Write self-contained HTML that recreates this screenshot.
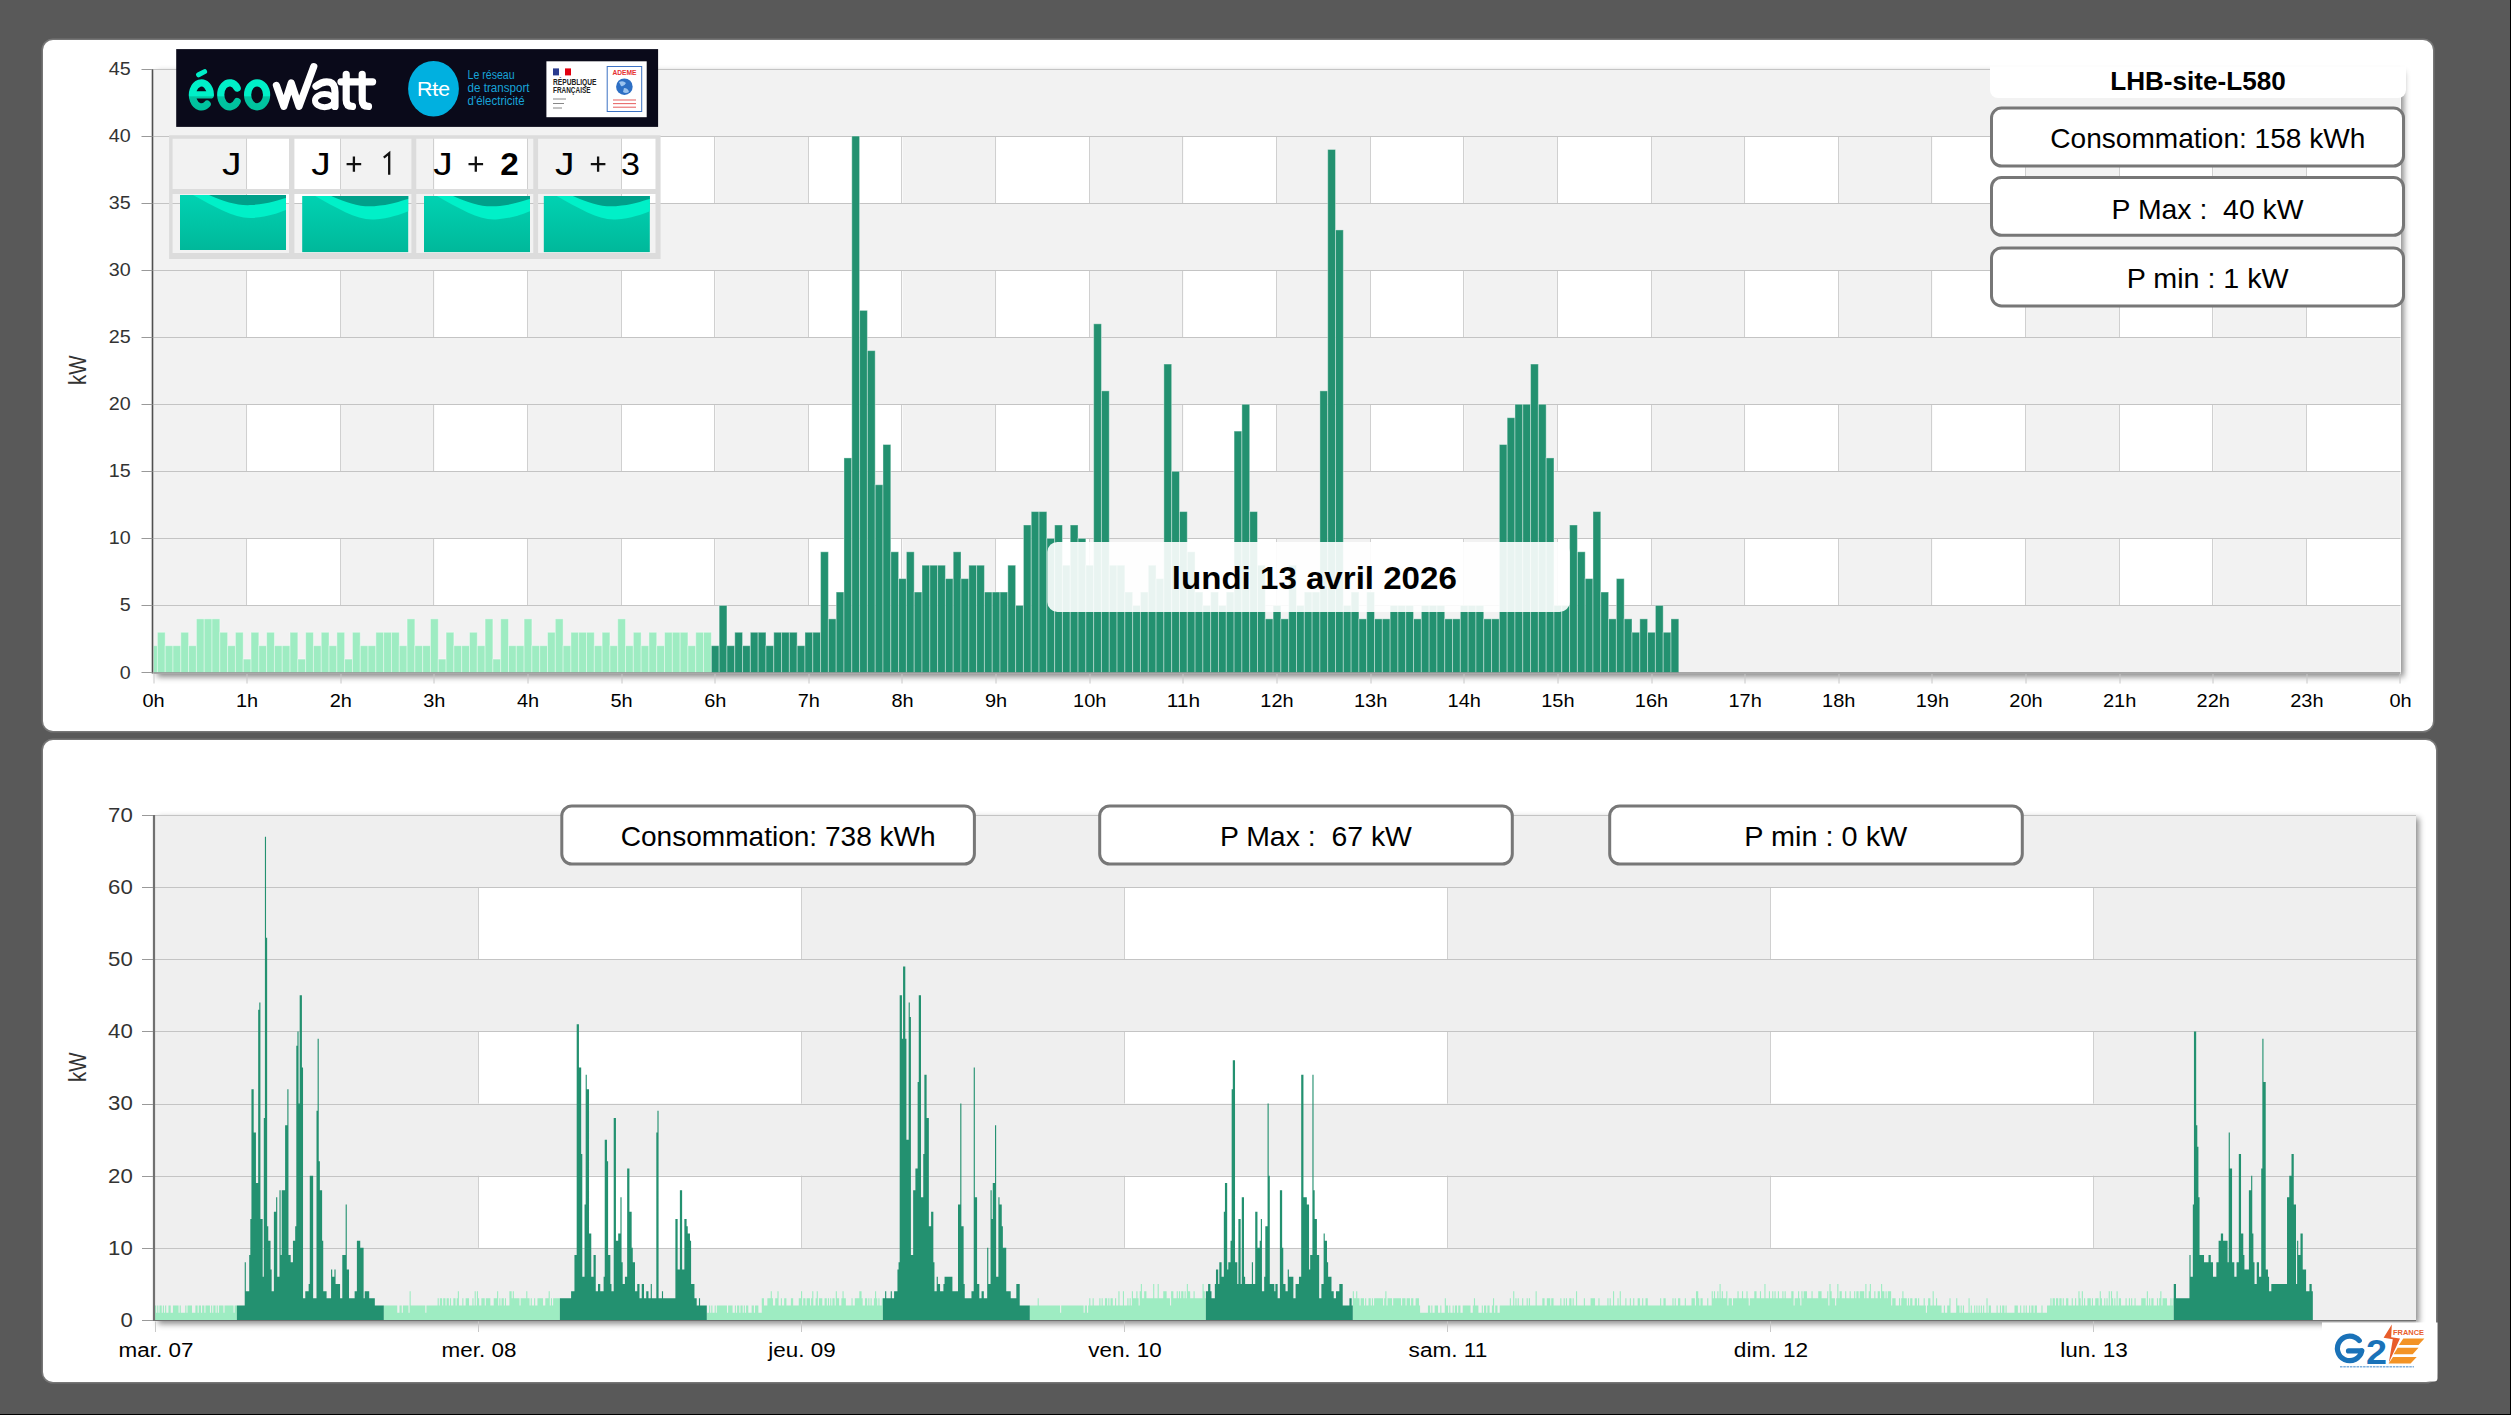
<!DOCTYPE html>
<html><head><meta charset="utf-8"><style>
html,body{margin:0;padding:0;}
body{width:2511px;height:1415px;background:#595959;position:relative;overflow:hidden;font-family:'Liberation Sans',sans-serif;}
.panel{position:absolute;background:#fff;border-radius:10px;box-shadow:0 0 0 1.5px #767676;}
.pshadow{position:absolute;box-shadow:3px 3px 6px rgba(0,0,0,0.45);background:#fff;}
svg{position:absolute;left:0;top:0;}
svg text{font-family:'Liberation Sans',sans-serif;}
</style></head><body>
<div style="position:absolute;left:2510px;top:0;width:1px;height:1415px;background:#000"></div>
<div style="position:absolute;left:0;top:1414px;width:2511px;height:1px;background:#000"></div>
<div class="panel" style="left:43px;top:39.5px;width:2389.5px;height:691px"></div>
<div class="panel" style="left:43px;top:739.5px;width:2393px;height:642px"></div>
<div class="pshadow" style="left:153.5px;top:69.0px;width:2247.0px;height:604.5px"></div>
<div class="pshadow" style="left:155.0px;top:815.0px;width:2261.0px;height:506.0px"></div>
<svg width="2511" height="1415" viewBox="0 0 2511 1415">
<rect x="153.5" y="69.0" width="2247" height="603.5" fill="#f2f2f2"/>
<rect x="247.12" y="538.39" width="93.62" height="67.06" fill="#fff"/>
<rect x="434.38" y="538.39" width="93.62" height="67.06" fill="#fff"/>
<rect x="621.62" y="538.39" width="93.62" height="67.06" fill="#fff"/>
<rect x="808.88" y="538.39" width="93.62" height="67.06" fill="#fff"/>
<rect x="996.12" y="538.39" width="93.62" height="67.06" fill="#fff"/>
<rect x="1183.38" y="538.39" width="93.62" height="67.06" fill="#fff"/>
<rect x="1370.62" y="538.39" width="93.62" height="67.06" fill="#fff"/>
<rect x="1557.88" y="538.39" width="93.62" height="67.06" fill="#fff"/>
<rect x="1745.12" y="538.39" width="93.62" height="67.06" fill="#fff"/>
<rect x="1932.38" y="538.39" width="93.62" height="67.06" fill="#fff"/>
<rect x="2119.62" y="538.39" width="93.62" height="67.06" fill="#fff"/>
<rect x="2306.88" y="538.39" width="93.62" height="67.06" fill="#fff"/>
<line x1="246.5" y1="538.39" x2="246.5" y2="605.44" stroke="#d0d0d0" stroke-width="1"/>
<line x1="340.5" y1="538.39" x2="340.5" y2="605.44" stroke="#d0d0d0" stroke-width="1"/>
<line x1="433.5" y1="538.39" x2="433.5" y2="605.44" stroke="#d0d0d0" stroke-width="1"/>
<line x1="527.5" y1="538.39" x2="527.5" y2="605.44" stroke="#d0d0d0" stroke-width="1"/>
<line x1="621.5" y1="538.39" x2="621.5" y2="605.44" stroke="#d0d0d0" stroke-width="1"/>
<line x1="714.5" y1="538.39" x2="714.5" y2="605.44" stroke="#d0d0d0" stroke-width="1"/>
<line x1="808.5" y1="538.39" x2="808.5" y2="605.44" stroke="#d0d0d0" stroke-width="1"/>
<line x1="901.5" y1="538.39" x2="901.5" y2="605.44" stroke="#d0d0d0" stroke-width="1"/>
<line x1="995.5" y1="538.39" x2="995.5" y2="605.44" stroke="#d0d0d0" stroke-width="1"/>
<line x1="1089.5" y1="538.39" x2="1089.5" y2="605.44" stroke="#d0d0d0" stroke-width="1"/>
<line x1="1182.5" y1="538.39" x2="1182.5" y2="605.44" stroke="#d0d0d0" stroke-width="1"/>
<line x1="1276.5" y1="538.39" x2="1276.5" y2="605.44" stroke="#d0d0d0" stroke-width="1"/>
<line x1="1370.5" y1="538.39" x2="1370.5" y2="605.44" stroke="#d0d0d0" stroke-width="1"/>
<line x1="1463.5" y1="538.39" x2="1463.5" y2="605.44" stroke="#d0d0d0" stroke-width="1"/>
<line x1="1557.5" y1="538.39" x2="1557.5" y2="605.44" stroke="#d0d0d0" stroke-width="1"/>
<line x1="1651.5" y1="538.39" x2="1651.5" y2="605.44" stroke="#d0d0d0" stroke-width="1"/>
<line x1="1744.5" y1="538.39" x2="1744.5" y2="605.44" stroke="#d0d0d0" stroke-width="1"/>
<line x1="1838.5" y1="538.39" x2="1838.5" y2="605.44" stroke="#d0d0d0" stroke-width="1"/>
<line x1="1931.5" y1="538.39" x2="1931.5" y2="605.44" stroke="#d0d0d0" stroke-width="1"/>
<line x1="2025.5" y1="538.39" x2="2025.5" y2="605.44" stroke="#d0d0d0" stroke-width="1"/>
<line x1="2119.5" y1="538.39" x2="2119.5" y2="605.44" stroke="#d0d0d0" stroke-width="1"/>
<line x1="2212.5" y1="538.39" x2="2212.5" y2="605.44" stroke="#d0d0d0" stroke-width="1"/>
<line x1="2306.5" y1="538.39" x2="2306.5" y2="605.44" stroke="#d0d0d0" stroke-width="1"/>
<rect x="247.12" y="404.28" width="93.62" height="67.06" fill="#fff"/>
<rect x="434.38" y="404.28" width="93.62" height="67.06" fill="#fff"/>
<rect x="621.62" y="404.28" width="93.62" height="67.06" fill="#fff"/>
<rect x="808.88" y="404.28" width="93.62" height="67.06" fill="#fff"/>
<rect x="996.12" y="404.28" width="93.62" height="67.06" fill="#fff"/>
<rect x="1183.38" y="404.28" width="93.62" height="67.06" fill="#fff"/>
<rect x="1370.62" y="404.28" width="93.62" height="67.06" fill="#fff"/>
<rect x="1557.88" y="404.28" width="93.62" height="67.06" fill="#fff"/>
<rect x="1745.12" y="404.28" width="93.62" height="67.06" fill="#fff"/>
<rect x="1932.38" y="404.28" width="93.62" height="67.06" fill="#fff"/>
<rect x="2119.62" y="404.28" width="93.62" height="67.06" fill="#fff"/>
<rect x="2306.88" y="404.28" width="93.62" height="67.06" fill="#fff"/>
<line x1="246.5" y1="404.28" x2="246.5" y2="471.33" stroke="#d0d0d0" stroke-width="1"/>
<line x1="340.5" y1="404.28" x2="340.5" y2="471.33" stroke="#d0d0d0" stroke-width="1"/>
<line x1="433.5" y1="404.28" x2="433.5" y2="471.33" stroke="#d0d0d0" stroke-width="1"/>
<line x1="527.5" y1="404.28" x2="527.5" y2="471.33" stroke="#d0d0d0" stroke-width="1"/>
<line x1="621.5" y1="404.28" x2="621.5" y2="471.33" stroke="#d0d0d0" stroke-width="1"/>
<line x1="714.5" y1="404.28" x2="714.5" y2="471.33" stroke="#d0d0d0" stroke-width="1"/>
<line x1="808.5" y1="404.28" x2="808.5" y2="471.33" stroke="#d0d0d0" stroke-width="1"/>
<line x1="901.5" y1="404.28" x2="901.5" y2="471.33" stroke="#d0d0d0" stroke-width="1"/>
<line x1="995.5" y1="404.28" x2="995.5" y2="471.33" stroke="#d0d0d0" stroke-width="1"/>
<line x1="1089.5" y1="404.28" x2="1089.5" y2="471.33" stroke="#d0d0d0" stroke-width="1"/>
<line x1="1182.5" y1="404.28" x2="1182.5" y2="471.33" stroke="#d0d0d0" stroke-width="1"/>
<line x1="1276.5" y1="404.28" x2="1276.5" y2="471.33" stroke="#d0d0d0" stroke-width="1"/>
<line x1="1370.5" y1="404.28" x2="1370.5" y2="471.33" stroke="#d0d0d0" stroke-width="1"/>
<line x1="1463.5" y1="404.28" x2="1463.5" y2="471.33" stroke="#d0d0d0" stroke-width="1"/>
<line x1="1557.5" y1="404.28" x2="1557.5" y2="471.33" stroke="#d0d0d0" stroke-width="1"/>
<line x1="1651.5" y1="404.28" x2="1651.5" y2="471.33" stroke="#d0d0d0" stroke-width="1"/>
<line x1="1744.5" y1="404.28" x2="1744.5" y2="471.33" stroke="#d0d0d0" stroke-width="1"/>
<line x1="1838.5" y1="404.28" x2="1838.5" y2="471.33" stroke="#d0d0d0" stroke-width="1"/>
<line x1="1931.5" y1="404.28" x2="1931.5" y2="471.33" stroke="#d0d0d0" stroke-width="1"/>
<line x1="2025.5" y1="404.28" x2="2025.5" y2="471.33" stroke="#d0d0d0" stroke-width="1"/>
<line x1="2119.5" y1="404.28" x2="2119.5" y2="471.33" stroke="#d0d0d0" stroke-width="1"/>
<line x1="2212.5" y1="404.28" x2="2212.5" y2="471.33" stroke="#d0d0d0" stroke-width="1"/>
<line x1="2306.5" y1="404.28" x2="2306.5" y2="471.33" stroke="#d0d0d0" stroke-width="1"/>
<rect x="247.12" y="270.17" width="93.62" height="67.06" fill="#fff"/>
<rect x="434.38" y="270.17" width="93.62" height="67.06" fill="#fff"/>
<rect x="621.62" y="270.17" width="93.62" height="67.06" fill="#fff"/>
<rect x="808.88" y="270.17" width="93.62" height="67.06" fill="#fff"/>
<rect x="996.12" y="270.17" width="93.62" height="67.06" fill="#fff"/>
<rect x="1183.38" y="270.17" width="93.62" height="67.06" fill="#fff"/>
<rect x="1370.62" y="270.17" width="93.62" height="67.06" fill="#fff"/>
<rect x="1557.88" y="270.17" width="93.62" height="67.06" fill="#fff"/>
<rect x="1745.12" y="270.17" width="93.62" height="67.06" fill="#fff"/>
<rect x="1932.38" y="270.17" width="93.62" height="67.06" fill="#fff"/>
<rect x="2119.62" y="270.17" width="93.62" height="67.06" fill="#fff"/>
<rect x="2306.88" y="270.17" width="93.62" height="67.06" fill="#fff"/>
<line x1="246.5" y1="270.17" x2="246.5" y2="337.22" stroke="#d0d0d0" stroke-width="1"/>
<line x1="340.5" y1="270.17" x2="340.5" y2="337.22" stroke="#d0d0d0" stroke-width="1"/>
<line x1="433.5" y1="270.17" x2="433.5" y2="337.22" stroke="#d0d0d0" stroke-width="1"/>
<line x1="527.5" y1="270.17" x2="527.5" y2="337.22" stroke="#d0d0d0" stroke-width="1"/>
<line x1="621.5" y1="270.17" x2="621.5" y2="337.22" stroke="#d0d0d0" stroke-width="1"/>
<line x1="714.5" y1="270.17" x2="714.5" y2="337.22" stroke="#d0d0d0" stroke-width="1"/>
<line x1="808.5" y1="270.17" x2="808.5" y2="337.22" stroke="#d0d0d0" stroke-width="1"/>
<line x1="901.5" y1="270.17" x2="901.5" y2="337.22" stroke="#d0d0d0" stroke-width="1"/>
<line x1="995.5" y1="270.17" x2="995.5" y2="337.22" stroke="#d0d0d0" stroke-width="1"/>
<line x1="1089.5" y1="270.17" x2="1089.5" y2="337.22" stroke="#d0d0d0" stroke-width="1"/>
<line x1="1182.5" y1="270.17" x2="1182.5" y2="337.22" stroke="#d0d0d0" stroke-width="1"/>
<line x1="1276.5" y1="270.17" x2="1276.5" y2="337.22" stroke="#d0d0d0" stroke-width="1"/>
<line x1="1370.5" y1="270.17" x2="1370.5" y2="337.22" stroke="#d0d0d0" stroke-width="1"/>
<line x1="1463.5" y1="270.17" x2="1463.5" y2="337.22" stroke="#d0d0d0" stroke-width="1"/>
<line x1="1557.5" y1="270.17" x2="1557.5" y2="337.22" stroke="#d0d0d0" stroke-width="1"/>
<line x1="1651.5" y1="270.17" x2="1651.5" y2="337.22" stroke="#d0d0d0" stroke-width="1"/>
<line x1="1744.5" y1="270.17" x2="1744.5" y2="337.22" stroke="#d0d0d0" stroke-width="1"/>
<line x1="1838.5" y1="270.17" x2="1838.5" y2="337.22" stroke="#d0d0d0" stroke-width="1"/>
<line x1="1931.5" y1="270.17" x2="1931.5" y2="337.22" stroke="#d0d0d0" stroke-width="1"/>
<line x1="2025.5" y1="270.17" x2="2025.5" y2="337.22" stroke="#d0d0d0" stroke-width="1"/>
<line x1="2119.5" y1="270.17" x2="2119.5" y2="337.22" stroke="#d0d0d0" stroke-width="1"/>
<line x1="2212.5" y1="270.17" x2="2212.5" y2="337.22" stroke="#d0d0d0" stroke-width="1"/>
<line x1="2306.5" y1="270.17" x2="2306.5" y2="337.22" stroke="#d0d0d0" stroke-width="1"/>
<rect x="247.12" y="136.06" width="93.62" height="67.06" fill="#fff"/>
<rect x="434.38" y="136.06" width="93.62" height="67.06" fill="#fff"/>
<rect x="621.62" y="136.06" width="93.62" height="67.06" fill="#fff"/>
<rect x="808.88" y="136.06" width="93.62" height="67.06" fill="#fff"/>
<rect x="996.12" y="136.06" width="93.62" height="67.06" fill="#fff"/>
<rect x="1183.38" y="136.06" width="93.62" height="67.06" fill="#fff"/>
<rect x="1370.62" y="136.06" width="93.62" height="67.06" fill="#fff"/>
<rect x="1557.88" y="136.06" width="93.62" height="67.06" fill="#fff"/>
<rect x="1745.12" y="136.06" width="93.62" height="67.06" fill="#fff"/>
<rect x="1932.38" y="136.06" width="93.62" height="67.06" fill="#fff"/>
<rect x="2119.62" y="136.06" width="93.62" height="67.06" fill="#fff"/>
<rect x="2306.88" y="136.06" width="93.62" height="67.06" fill="#fff"/>
<line x1="246.5" y1="136.06" x2="246.5" y2="203.11" stroke="#d0d0d0" stroke-width="1"/>
<line x1="340.5" y1="136.06" x2="340.5" y2="203.11" stroke="#d0d0d0" stroke-width="1"/>
<line x1="433.5" y1="136.06" x2="433.5" y2="203.11" stroke="#d0d0d0" stroke-width="1"/>
<line x1="527.5" y1="136.06" x2="527.5" y2="203.11" stroke="#d0d0d0" stroke-width="1"/>
<line x1="621.5" y1="136.06" x2="621.5" y2="203.11" stroke="#d0d0d0" stroke-width="1"/>
<line x1="714.5" y1="136.06" x2="714.5" y2="203.11" stroke="#d0d0d0" stroke-width="1"/>
<line x1="808.5" y1="136.06" x2="808.5" y2="203.11" stroke="#d0d0d0" stroke-width="1"/>
<line x1="901.5" y1="136.06" x2="901.5" y2="203.11" stroke="#d0d0d0" stroke-width="1"/>
<line x1="995.5" y1="136.06" x2="995.5" y2="203.11" stroke="#d0d0d0" stroke-width="1"/>
<line x1="1089.5" y1="136.06" x2="1089.5" y2="203.11" stroke="#d0d0d0" stroke-width="1"/>
<line x1="1182.5" y1="136.06" x2="1182.5" y2="203.11" stroke="#d0d0d0" stroke-width="1"/>
<line x1="1276.5" y1="136.06" x2="1276.5" y2="203.11" stroke="#d0d0d0" stroke-width="1"/>
<line x1="1370.5" y1="136.06" x2="1370.5" y2="203.11" stroke="#d0d0d0" stroke-width="1"/>
<line x1="1463.5" y1="136.06" x2="1463.5" y2="203.11" stroke="#d0d0d0" stroke-width="1"/>
<line x1="1557.5" y1="136.06" x2="1557.5" y2="203.11" stroke="#d0d0d0" stroke-width="1"/>
<line x1="1651.5" y1="136.06" x2="1651.5" y2="203.11" stroke="#d0d0d0" stroke-width="1"/>
<line x1="1744.5" y1="136.06" x2="1744.5" y2="203.11" stroke="#d0d0d0" stroke-width="1"/>
<line x1="1838.5" y1="136.06" x2="1838.5" y2="203.11" stroke="#d0d0d0" stroke-width="1"/>
<line x1="1931.5" y1="136.06" x2="1931.5" y2="203.11" stroke="#d0d0d0" stroke-width="1"/>
<line x1="2025.5" y1="136.06" x2="2025.5" y2="203.11" stroke="#d0d0d0" stroke-width="1"/>
<line x1="2119.5" y1="136.06" x2="2119.5" y2="203.11" stroke="#d0d0d0" stroke-width="1"/>
<line x1="2212.5" y1="136.06" x2="2212.5" y2="203.11" stroke="#d0d0d0" stroke-width="1"/>
<line x1="2306.5" y1="136.06" x2="2306.5" y2="203.11" stroke="#d0d0d0" stroke-width="1"/>
<line x1="153.5" y1="605.5" x2="2400.5" y2="605.5" stroke="#c4c4c4" stroke-width="1"/>
<line x1="153.5" y1="538.5" x2="2400.5" y2="538.5" stroke="#c4c4c4" stroke-width="1"/>
<line x1="153.5" y1="471.5" x2="2400.5" y2="471.5" stroke="#c4c4c4" stroke-width="1"/>
<line x1="153.5" y1="404.5" x2="2400.5" y2="404.5" stroke="#c4c4c4" stroke-width="1"/>
<line x1="153.5" y1="337.5" x2="2400.5" y2="337.5" stroke="#c4c4c4" stroke-width="1"/>
<line x1="153.5" y1="270.5" x2="2400.5" y2="270.5" stroke="#c4c4c4" stroke-width="1"/>
<line x1="153.5" y1="203.5" x2="2400.5" y2="203.5" stroke="#c4c4c4" stroke-width="1"/>
<line x1="153.5" y1="136.5" x2="2400.5" y2="136.5" stroke="#c4c4c4" stroke-width="1"/>
<line x1="153.5" y1="69.5" x2="2400.5" y2="69.5" stroke="#c4c4c4" stroke-width="1"/>
<g stroke="rgba(255,255,255,0.38)" stroke-width="1">
<rect x="153.5" y="645.68" width="3.9" height="26.82" fill="#9eecc2"/>
<rect x="157.4" y="632.27" width="7.8" height="40.23" fill="#9eecc2"/>
<rect x="165.2" y="645.68" width="7.8" height="26.82" fill="#9eecc2"/>
<rect x="173.01" y="645.68" width="7.8" height="26.82" fill="#9eecc2"/>
<rect x="180.81" y="632.27" width="7.8" height="40.23" fill="#9eecc2"/>
<rect x="188.61" y="645.68" width="7.8" height="26.82" fill="#9eecc2"/>
<rect x="196.41" y="618.86" width="7.8" height="53.64" fill="#9eecc2"/>
<rect x="204.21" y="618.86" width="7.8" height="53.64" fill="#9eecc2"/>
<rect x="212.02" y="618.86" width="7.8" height="53.64" fill="#9eecc2"/>
<rect x="219.82" y="632.27" width="7.8" height="40.23" fill="#9eecc2"/>
<rect x="227.62" y="645.68" width="7.8" height="26.82" fill="#9eecc2"/>
<rect x="235.42" y="632.27" width="7.8" height="40.23" fill="#9eecc2"/>
<rect x="243.22" y="659.09" width="7.8" height="13.41" fill="#9eecc2"/>
<rect x="251.03" y="632.27" width="7.8" height="40.23" fill="#9eecc2"/>
<rect x="258.83" y="645.68" width="7.8" height="26.82" fill="#9eecc2"/>
<rect x="266.63" y="632.27" width="7.8" height="40.23" fill="#9eecc2"/>
<rect x="274.43" y="645.68" width="7.8" height="26.82" fill="#9eecc2"/>
<rect x="282.23" y="645.68" width="7.8" height="26.82" fill="#9eecc2"/>
<rect x="290.04" y="632.27" width="7.8" height="40.23" fill="#9eecc2"/>
<rect x="297.84" y="659.09" width="7.8" height="13.41" fill="#9eecc2"/>
<rect x="305.64" y="632.27" width="7.8" height="40.23" fill="#9eecc2"/>
<rect x="313.44" y="645.68" width="7.8" height="26.82" fill="#9eecc2"/>
<rect x="321.24" y="632.27" width="7.8" height="40.23" fill="#9eecc2"/>
<rect x="329.05" y="645.68" width="7.8" height="26.82" fill="#9eecc2"/>
<rect x="336.85" y="632.27" width="7.8" height="40.23" fill="#9eecc2"/>
<rect x="344.65" y="659.09" width="7.8" height="13.41" fill="#9eecc2"/>
<rect x="352.45" y="632.27" width="7.8" height="40.23" fill="#9eecc2"/>
<rect x="360.26" y="645.68" width="7.8" height="26.82" fill="#9eecc2"/>
<rect x="368.06" y="645.68" width="7.8" height="26.82" fill="#9eecc2"/>
<rect x="375.86" y="632.27" width="7.8" height="40.23" fill="#9eecc2"/>
<rect x="383.66" y="632.27" width="7.8" height="40.23" fill="#9eecc2"/>
<rect x="391.46" y="632.27" width="7.8" height="40.23" fill="#9eecc2"/>
<rect x="399.27" y="645.68" width="7.8" height="26.82" fill="#9eecc2"/>
<rect x="407.07" y="618.86" width="7.8" height="53.64" fill="#9eecc2"/>
<rect x="414.87" y="645.68" width="7.8" height="26.82" fill="#9eecc2"/>
<rect x="422.67" y="645.68" width="7.8" height="26.82" fill="#9eecc2"/>
<rect x="430.47" y="618.86" width="7.8" height="53.64" fill="#9eecc2"/>
<rect x="438.28" y="659.09" width="7.8" height="13.41" fill="#9eecc2"/>
<rect x="446.08" y="632.27" width="7.8" height="40.23" fill="#9eecc2"/>
<rect x="453.88" y="645.68" width="7.8" height="26.82" fill="#9eecc2"/>
<rect x="461.68" y="645.68" width="7.8" height="26.82" fill="#9eecc2"/>
<rect x="469.48" y="632.27" width="7.8" height="40.23" fill="#9eecc2"/>
<rect x="477.29" y="645.68" width="7.8" height="26.82" fill="#9eecc2"/>
<rect x="485.09" y="618.86" width="7.8" height="53.64" fill="#9eecc2"/>
<rect x="492.89" y="659.09" width="7.8" height="13.41" fill="#9eecc2"/>
<rect x="500.69" y="618.86" width="7.8" height="53.64" fill="#9eecc2"/>
<rect x="508.49" y="645.68" width="7.8" height="26.82" fill="#9eecc2"/>
<rect x="516.3" y="645.68" width="7.8" height="26.82" fill="#9eecc2"/>
<rect x="524.1" y="618.86" width="7.8" height="53.64" fill="#9eecc2"/>
<rect x="531.9" y="645.68" width="7.8" height="26.82" fill="#9eecc2"/>
<rect x="539.7" y="645.68" width="7.8" height="26.82" fill="#9eecc2"/>
<rect x="547.51" y="632.27" width="7.8" height="40.23" fill="#9eecc2"/>
<rect x="555.31" y="618.86" width="7.8" height="53.64" fill="#9eecc2"/>
<rect x="563.11" y="645.68" width="7.8" height="26.82" fill="#9eecc2"/>
<rect x="570.91" y="632.27" width="7.8" height="40.23" fill="#9eecc2"/>
<rect x="578.71" y="632.27" width="7.8" height="40.23" fill="#9eecc2"/>
<rect x="586.52" y="632.27" width="7.8" height="40.23" fill="#9eecc2"/>
<rect x="594.32" y="645.68" width="7.8" height="26.82" fill="#9eecc2"/>
<rect x="602.12" y="632.27" width="7.8" height="40.23" fill="#9eecc2"/>
<rect x="609.92" y="645.68" width="7.8" height="26.82" fill="#9eecc2"/>
<rect x="617.72" y="618.86" width="7.8" height="53.64" fill="#9eecc2"/>
<rect x="625.53" y="645.68" width="7.8" height="26.82" fill="#9eecc2"/>
<rect x="633.33" y="632.27" width="7.8" height="40.23" fill="#9eecc2"/>
<rect x="641.13" y="645.68" width="7.8" height="26.82" fill="#9eecc2"/>
<rect x="648.93" y="632.27" width="7.8" height="40.23" fill="#9eecc2"/>
<rect x="656.73" y="645.68" width="7.8" height="26.82" fill="#9eecc2"/>
<rect x="664.54" y="632.27" width="7.8" height="40.23" fill="#9eecc2"/>
<rect x="672.34" y="632.27" width="7.8" height="40.23" fill="#9eecc2"/>
<rect x="680.14" y="632.27" width="7.8" height="40.23" fill="#9eecc2"/>
<rect x="687.94" y="645.68" width="7.8" height="26.82" fill="#9eecc2"/>
<rect x="695.74" y="632.27" width="7.8" height="40.23" fill="#9eecc2"/>
<rect x="703.55" y="632.27" width="7.8" height="40.23" fill="#9eecc2"/>
<rect x="711.35" y="645.68" width="7.8" height="26.82" fill="#239170"/>
<rect x="719.15" y="605.44" width="7.8" height="67.06" fill="#239170"/>
<rect x="726.95" y="645.68" width="7.8" height="26.82" fill="#239170"/>
<rect x="734.76" y="632.27" width="7.8" height="40.23" fill="#239170"/>
<rect x="742.56" y="645.68" width="7.8" height="26.82" fill="#239170"/>
<rect x="750.36" y="632.27" width="7.8" height="40.23" fill="#239170"/>
<rect x="758.16" y="632.27" width="7.8" height="40.23" fill="#239170"/>
<rect x="765.96" y="645.68" width="7.8" height="26.82" fill="#239170"/>
<rect x="773.77" y="632.27" width="7.8" height="40.23" fill="#239170"/>
<rect x="781.57" y="632.27" width="7.8" height="40.23" fill="#239170"/>
<rect x="789.37" y="632.27" width="7.8" height="40.23" fill="#239170"/>
<rect x="797.17" y="645.68" width="7.8" height="26.82" fill="#239170"/>
<rect x="804.97" y="632.27" width="7.8" height="40.23" fill="#239170"/>
<rect x="812.78" y="632.27" width="7.8" height="40.23" fill="#239170"/>
<rect x="820.58" y="551.8" width="7.8" height="120.7" fill="#239170"/>
<rect x="828.38" y="618.86" width="7.8" height="53.64" fill="#239170"/>
<rect x="836.18" y="592.03" width="7.8" height="80.47" fill="#239170"/>
<rect x="843.98" y="457.92" width="7.8" height="214.58" fill="#239170"/>
<rect x="851.79" y="136.06" width="7.8" height="536.44" fill="#239170"/>
<rect x="859.59" y="310.4" width="7.8" height="362.1" fill="#239170"/>
<rect x="867.39" y="350.63" width="7.8" height="321.87" fill="#239170"/>
<rect x="875.19" y="484.74" width="7.8" height="187.76" fill="#239170"/>
<rect x="882.99" y="444.51" width="7.8" height="227.99" fill="#239170"/>
<rect x="890.8" y="551.8" width="7.8" height="120.7" fill="#239170"/>
<rect x="898.6" y="578.62" width="7.8" height="93.88" fill="#239170"/>
<rect x="906.4" y="551.8" width="7.8" height="120.7" fill="#239170"/>
<rect x="914.2" y="592.03" width="7.8" height="80.47" fill="#239170"/>
<rect x="922.01" y="565.21" width="7.8" height="107.29" fill="#239170"/>
<rect x="929.81" y="565.21" width="7.8" height="107.29" fill="#239170"/>
<rect x="937.61" y="565.21" width="7.8" height="107.29" fill="#239170"/>
<rect x="945.41" y="578.62" width="7.8" height="93.88" fill="#239170"/>
<rect x="953.21" y="551.8" width="7.8" height="120.7" fill="#239170"/>
<rect x="961.02" y="578.62" width="7.8" height="93.88" fill="#239170"/>
<rect x="968.82" y="565.21" width="7.8" height="107.29" fill="#239170"/>
<rect x="976.62" y="565.21" width="7.8" height="107.29" fill="#239170"/>
<rect x="984.42" y="592.03" width="7.8" height="80.47" fill="#239170"/>
<rect x="992.22" y="592.03" width="7.8" height="80.47" fill="#239170"/>
<rect x="1000.03" y="592.03" width="7.8" height="80.47" fill="#239170"/>
<rect x="1007.83" y="565.21" width="7.8" height="107.29" fill="#239170"/>
<rect x="1015.63" y="605.44" width="7.8" height="67.06" fill="#239170"/>
<rect x="1023.43" y="524.98" width="7.8" height="147.52" fill="#239170"/>
<rect x="1031.23" y="511.57" width="7.8" height="160.93" fill="#239170"/>
<rect x="1039.04" y="511.57" width="7.8" height="160.93" fill="#239170"/>
<rect x="1046.84" y="538.39" width="7.8" height="134.11" fill="#239170"/>
<rect x="1054.64" y="524.98" width="7.8" height="147.52" fill="#239170"/>
<rect x="1062.44" y="565.21" width="7.8" height="107.29" fill="#239170"/>
<rect x="1070.24" y="524.98" width="7.8" height="147.52" fill="#239170"/>
<rect x="1078.05" y="538.39" width="7.8" height="134.11" fill="#239170"/>
<rect x="1085.85" y="565.21" width="7.8" height="107.29" fill="#239170"/>
<rect x="1093.65" y="323.81" width="7.8" height="348.69" fill="#239170"/>
<rect x="1101.45" y="390.87" width="7.8" height="281.63" fill="#239170"/>
<rect x="1109.26" y="565.21" width="7.8" height="107.29" fill="#239170"/>
<rect x="1117.06" y="565.21" width="7.8" height="107.29" fill="#239170"/>
<rect x="1124.86" y="592.03" width="7.8" height="80.47" fill="#239170"/>
<rect x="1132.66" y="605.44" width="7.8" height="67.06" fill="#239170"/>
<rect x="1140.46" y="592.03" width="7.8" height="80.47" fill="#239170"/>
<rect x="1148.27" y="565.21" width="7.8" height="107.29" fill="#239170"/>
<rect x="1156.07" y="578.62" width="7.8" height="93.88" fill="#239170"/>
<rect x="1163.87" y="364.04" width="7.8" height="308.46" fill="#239170"/>
<rect x="1171.67" y="471.33" width="7.8" height="201.17" fill="#239170"/>
<rect x="1179.47" y="511.57" width="7.8" height="160.93" fill="#239170"/>
<rect x="1187.28" y="551.8" width="7.8" height="120.7" fill="#239170"/>
<rect x="1195.08" y="592.03" width="7.8" height="80.47" fill="#239170"/>
<rect x="1202.88" y="605.44" width="7.8" height="67.06" fill="#239170"/>
<rect x="1210.68" y="592.03" width="7.8" height="80.47" fill="#239170"/>
<rect x="1218.48" y="605.44" width="7.8" height="67.06" fill="#239170"/>
<rect x="1226.29" y="592.03" width="7.8" height="80.47" fill="#239170"/>
<rect x="1234.09" y="431.1" width="7.8" height="241.4" fill="#239170"/>
<rect x="1241.89" y="404.28" width="7.8" height="268.22" fill="#239170"/>
<rect x="1249.69" y="511.57" width="7.8" height="160.93" fill="#239170"/>
<rect x="1257.49" y="565.21" width="7.8" height="107.29" fill="#239170"/>
<rect x="1265.3" y="618.86" width="7.8" height="53.64" fill="#239170"/>
<rect x="1273.1" y="605.44" width="7.8" height="67.06" fill="#239170"/>
<rect x="1280.9" y="618.86" width="7.8" height="53.64" fill="#239170"/>
<rect x="1288.7" y="565.21" width="7.8" height="107.29" fill="#239170"/>
<rect x="1296.51" y="605.44" width="7.8" height="67.06" fill="#239170"/>
<rect x="1304.31" y="592.03" width="7.8" height="80.47" fill="#239170"/>
<rect x="1312.11" y="592.03" width="7.8" height="80.47" fill="#239170"/>
<rect x="1319.91" y="390.87" width="7.8" height="281.63" fill="#239170"/>
<rect x="1327.71" y="149.47" width="7.8" height="523.03" fill="#239170"/>
<rect x="1335.52" y="229.93" width="7.8" height="442.57" fill="#239170"/>
<rect x="1343.32" y="605.44" width="7.8" height="67.06" fill="#239170"/>
<rect x="1351.12" y="592.03" width="7.8" height="80.47" fill="#239170"/>
<rect x="1358.92" y="618.86" width="7.8" height="53.64" fill="#239170"/>
<rect x="1366.72" y="592.03" width="7.8" height="80.47" fill="#239170"/>
<rect x="1374.53" y="618.86" width="7.8" height="53.64" fill="#239170"/>
<rect x="1382.33" y="618.86" width="7.8" height="53.64" fill="#239170"/>
<rect x="1390.13" y="605.44" width="7.8" height="67.06" fill="#239170"/>
<rect x="1397.93" y="605.44" width="7.8" height="67.06" fill="#239170"/>
<rect x="1405.73" y="605.44" width="7.8" height="67.06" fill="#239170"/>
<rect x="1413.54" y="618.86" width="7.8" height="53.64" fill="#239170"/>
<rect x="1421.34" y="605.44" width="7.8" height="67.06" fill="#239170"/>
<rect x="1429.14" y="605.44" width="7.8" height="67.06" fill="#239170"/>
<rect x="1436.94" y="605.44" width="7.8" height="67.06" fill="#239170"/>
<rect x="1444.74" y="618.86" width="7.8" height="53.64" fill="#239170"/>
<rect x="1452.55" y="618.86" width="7.8" height="53.64" fill="#239170"/>
<rect x="1460.35" y="605.44" width="7.8" height="67.06" fill="#239170"/>
<rect x="1468.15" y="605.44" width="7.8" height="67.06" fill="#239170"/>
<rect x="1475.95" y="605.44" width="7.8" height="67.06" fill="#239170"/>
<rect x="1483.76" y="618.86" width="7.8" height="53.64" fill="#239170"/>
<rect x="1491.56" y="618.86" width="7.8" height="53.64" fill="#239170"/>
<rect x="1499.36" y="444.51" width="7.8" height="227.99" fill="#239170"/>
<rect x="1507.16" y="417.69" width="7.8" height="254.81" fill="#239170"/>
<rect x="1514.96" y="404.28" width="7.8" height="268.22" fill="#239170"/>
<rect x="1522.77" y="404.28" width="7.8" height="268.22" fill="#239170"/>
<rect x="1530.57" y="364.04" width="7.8" height="308.46" fill="#239170"/>
<rect x="1538.37" y="404.28" width="7.8" height="268.22" fill="#239170"/>
<rect x="1546.17" y="457.92" width="7.8" height="214.58" fill="#239170"/>
<rect x="1553.97" y="605.44" width="7.8" height="67.06" fill="#239170"/>
<rect x="1561.78" y="605.44" width="7.8" height="67.06" fill="#239170"/>
<rect x="1569.58" y="524.98" width="7.8" height="147.52" fill="#239170"/>
<rect x="1577.38" y="551.8" width="7.8" height="120.7" fill="#239170"/>
<rect x="1585.18" y="578.62" width="7.8" height="93.88" fill="#239170"/>
<rect x="1592.98" y="511.57" width="7.8" height="160.93" fill="#239170"/>
<rect x="1600.79" y="592.03" width="7.8" height="80.47" fill="#239170"/>
<rect x="1608.59" y="618.86" width="7.8" height="53.64" fill="#239170"/>
<rect x="1616.39" y="578.62" width="7.8" height="93.88" fill="#239170"/>
<rect x="1624.19" y="618.86" width="7.8" height="53.64" fill="#239170"/>
<rect x="1631.99" y="632.27" width="7.8" height="40.23" fill="#239170"/>
<rect x="1639.8" y="618.86" width="7.8" height="53.64" fill="#239170"/>
<rect x="1647.6" y="632.27" width="7.8" height="40.23" fill="#239170"/>
<rect x="1655.4" y="605.44" width="7.8" height="67.06" fill="#239170"/>
<rect x="1663.2" y="632.27" width="7.8" height="40.23" fill="#239170"/>
<rect x="1671.01" y="618.86" width="7.8" height="53.64" fill="#239170"/>
</g>
<line x1="152.5" y1="69.0" x2="152.5" y2="673.5" stroke="#505050" stroke-width="1.6"/>
<line x1="153.5" y1="673.0" x2="2400.5" y2="673.0" stroke="#555" stroke-width="1.2"/>
<line x1="141.5" y1="672.5" x2="152.5" y2="672.5" stroke="#999" stroke-width="1"/>
<text x="130.8" y="678.5" font-size="17.6" text-anchor="end" fill="#333" font-weight="normal" textLength="10.97" lengthAdjust="spacingAndGlyphs">0</text>
<line x1="141.5" y1="605.5" x2="152.5" y2="605.5" stroke="#999" stroke-width="1"/>
<text x="130.8" y="611.44" font-size="17.6" text-anchor="end" fill="#333" font-weight="normal" textLength="10.97" lengthAdjust="spacingAndGlyphs">5</text>
<line x1="141.5" y1="538.5" x2="152.5" y2="538.5" stroke="#999" stroke-width="1"/>
<text x="130.8" y="544.39" font-size="17.6" text-anchor="end" fill="#333" font-weight="normal" textLength="21.95" lengthAdjust="spacingAndGlyphs">10</text>
<line x1="141.5" y1="471.5" x2="152.5" y2="471.5" stroke="#999" stroke-width="1"/>
<text x="130.8" y="477.33" font-size="17.6" text-anchor="end" fill="#333" font-weight="normal" textLength="21.95" lengthAdjust="spacingAndGlyphs">15</text>
<line x1="141.5" y1="404.5" x2="152.5" y2="404.5" stroke="#999" stroke-width="1"/>
<text x="130.8" y="410.28" font-size="17.6" text-anchor="end" fill="#333" font-weight="normal" textLength="21.95" lengthAdjust="spacingAndGlyphs">20</text>
<line x1="141.5" y1="337.5" x2="152.5" y2="337.5" stroke="#999" stroke-width="1"/>
<text x="130.8" y="343.22" font-size="17.6" text-anchor="end" fill="#333" font-weight="normal" textLength="21.95" lengthAdjust="spacingAndGlyphs">25</text>
<line x1="141.5" y1="270.5" x2="152.5" y2="270.5" stroke="#999" stroke-width="1"/>
<text x="130.8" y="276.17" font-size="17.6" text-anchor="end" fill="#333" font-weight="normal" textLength="21.95" lengthAdjust="spacingAndGlyphs">30</text>
<line x1="141.5" y1="203.5" x2="152.5" y2="203.5" stroke="#999" stroke-width="1"/>
<text x="130.8" y="209.11" font-size="17.6" text-anchor="end" fill="#333" font-weight="normal" textLength="21.95" lengthAdjust="spacingAndGlyphs">35</text>
<line x1="141.5" y1="136.5" x2="152.5" y2="136.5" stroke="#999" stroke-width="1"/>
<text x="130.8" y="142.06" font-size="17.6" text-anchor="end" fill="#333" font-weight="normal" textLength="21.95" lengthAdjust="spacingAndGlyphs">40</text>
<line x1="141.5" y1="69.5" x2="152.5" y2="69.5" stroke="#999" stroke-width="1"/>
<text x="130.8" y="75" font-size="17.6" text-anchor="end" fill="#333" font-weight="normal" textLength="21.95" lengthAdjust="spacingAndGlyphs">45</text>
<line x1="154" y1="674.0" x2="154" y2="683.5" stroke="#c8c8c8" stroke-width="1"/>
<text x="153.5" y="707" font-size="18.4" text-anchor="middle" fill="#000" font-weight="normal" textLength="22.2" lengthAdjust="spacingAndGlyphs">0h</text>
<line x1="247" y1="674.0" x2="247" y2="683.5" stroke="#c8c8c8" stroke-width="1"/>
<text x="247.12" y="707" font-size="18.4" text-anchor="middle" fill="#000" font-weight="normal" textLength="22.2" lengthAdjust="spacingAndGlyphs">1h</text>
<line x1="341" y1="674.0" x2="341" y2="683.5" stroke="#c8c8c8" stroke-width="1"/>
<text x="340.75" y="707" font-size="18.4" text-anchor="middle" fill="#000" font-weight="normal" textLength="22.2" lengthAdjust="spacingAndGlyphs">2h</text>
<line x1="434" y1="674.0" x2="434" y2="683.5" stroke="#c8c8c8" stroke-width="1"/>
<text x="434.38" y="707" font-size="18.4" text-anchor="middle" fill="#000" font-weight="normal" textLength="22.2" lengthAdjust="spacingAndGlyphs">3h</text>
<line x1="528" y1="674.0" x2="528" y2="683.5" stroke="#c8c8c8" stroke-width="1"/>
<text x="528" y="707" font-size="18.4" text-anchor="middle" fill="#000" font-weight="normal" textLength="22.2" lengthAdjust="spacingAndGlyphs">4h</text>
<line x1="622" y1="674.0" x2="622" y2="683.5" stroke="#c8c8c8" stroke-width="1"/>
<text x="621.62" y="707" font-size="18.4" text-anchor="middle" fill="#000" font-weight="normal" textLength="22.2" lengthAdjust="spacingAndGlyphs">5h</text>
<line x1="715" y1="674.0" x2="715" y2="683.5" stroke="#c8c8c8" stroke-width="1"/>
<text x="715.25" y="707" font-size="18.4" text-anchor="middle" fill="#000" font-weight="normal" textLength="22.2" lengthAdjust="spacingAndGlyphs">6h</text>
<line x1="809" y1="674.0" x2="809" y2="683.5" stroke="#c8c8c8" stroke-width="1"/>
<text x="808.88" y="707" font-size="18.4" text-anchor="middle" fill="#000" font-weight="normal" textLength="22.2" lengthAdjust="spacingAndGlyphs">7h</text>
<line x1="902" y1="674.0" x2="902" y2="683.5" stroke="#c8c8c8" stroke-width="1"/>
<text x="902.5" y="707" font-size="18.4" text-anchor="middle" fill="#000" font-weight="normal" textLength="22.2" lengthAdjust="spacingAndGlyphs">8h</text>
<line x1="996" y1="674.0" x2="996" y2="683.5" stroke="#c8c8c8" stroke-width="1"/>
<text x="996.12" y="707" font-size="18.4" text-anchor="middle" fill="#000" font-weight="normal" textLength="22.2" lengthAdjust="spacingAndGlyphs">9h</text>
<line x1="1090" y1="674.0" x2="1090" y2="683.5" stroke="#c8c8c8" stroke-width="1"/>
<text x="1089.75" y="707" font-size="18.4" text-anchor="middle" fill="#000" font-weight="normal" textLength="33.32" lengthAdjust="spacingAndGlyphs">10h</text>
<line x1="1183" y1="674.0" x2="1183" y2="683.5" stroke="#c8c8c8" stroke-width="1"/>
<text x="1183.38" y="707" font-size="18.4" text-anchor="middle" fill="#000" font-weight="normal" textLength="33.32" lengthAdjust="spacingAndGlyphs">11h</text>
<line x1="1277" y1="674.0" x2="1277" y2="683.5" stroke="#c8c8c8" stroke-width="1"/>
<text x="1277" y="707" font-size="18.4" text-anchor="middle" fill="#000" font-weight="normal" textLength="33.32" lengthAdjust="spacingAndGlyphs">12h</text>
<line x1="1371" y1="674.0" x2="1371" y2="683.5" stroke="#c8c8c8" stroke-width="1"/>
<text x="1370.62" y="707" font-size="18.4" text-anchor="middle" fill="#000" font-weight="normal" textLength="33.32" lengthAdjust="spacingAndGlyphs">13h</text>
<line x1="1464" y1="674.0" x2="1464" y2="683.5" stroke="#c8c8c8" stroke-width="1"/>
<text x="1464.25" y="707" font-size="18.4" text-anchor="middle" fill="#000" font-weight="normal" textLength="33.32" lengthAdjust="spacingAndGlyphs">14h</text>
<line x1="1558" y1="674.0" x2="1558" y2="683.5" stroke="#c8c8c8" stroke-width="1"/>
<text x="1557.88" y="707" font-size="18.4" text-anchor="middle" fill="#000" font-weight="normal" textLength="33.32" lengthAdjust="spacingAndGlyphs">15h</text>
<line x1="1652" y1="674.0" x2="1652" y2="683.5" stroke="#c8c8c8" stroke-width="1"/>
<text x="1651.5" y="707" font-size="18.4" text-anchor="middle" fill="#000" font-weight="normal" textLength="33.32" lengthAdjust="spacingAndGlyphs">16h</text>
<line x1="1745" y1="674.0" x2="1745" y2="683.5" stroke="#c8c8c8" stroke-width="1"/>
<text x="1745.12" y="707" font-size="18.4" text-anchor="middle" fill="#000" font-weight="normal" textLength="33.32" lengthAdjust="spacingAndGlyphs">17h</text>
<line x1="1839" y1="674.0" x2="1839" y2="683.5" stroke="#c8c8c8" stroke-width="1"/>
<text x="1838.75" y="707" font-size="18.4" text-anchor="middle" fill="#000" font-weight="normal" textLength="33.32" lengthAdjust="spacingAndGlyphs">18h</text>
<line x1="1932" y1="674.0" x2="1932" y2="683.5" stroke="#c8c8c8" stroke-width="1"/>
<text x="1932.38" y="707" font-size="18.4" text-anchor="middle" fill="#000" font-weight="normal" textLength="33.32" lengthAdjust="spacingAndGlyphs">19h</text>
<line x1="2026" y1="674.0" x2="2026" y2="683.5" stroke="#c8c8c8" stroke-width="1"/>
<text x="2026" y="707" font-size="18.4" text-anchor="middle" fill="#000" font-weight="normal" textLength="33.32" lengthAdjust="spacingAndGlyphs">20h</text>
<line x1="2120" y1="674.0" x2="2120" y2="683.5" stroke="#c8c8c8" stroke-width="1"/>
<text x="2119.62" y="707" font-size="18.4" text-anchor="middle" fill="#000" font-weight="normal" textLength="33.32" lengthAdjust="spacingAndGlyphs">21h</text>
<line x1="2213" y1="674.0" x2="2213" y2="683.5" stroke="#c8c8c8" stroke-width="1"/>
<text x="2213.25" y="707" font-size="18.4" text-anchor="middle" fill="#000" font-weight="normal" textLength="33.32" lengthAdjust="spacingAndGlyphs">22h</text>
<line x1="2307" y1="674.0" x2="2307" y2="683.5" stroke="#c8c8c8" stroke-width="1"/>
<text x="2306.88" y="707" font-size="18.4" text-anchor="middle" fill="#000" font-weight="normal" textLength="33.32" lengthAdjust="spacingAndGlyphs">23h</text>
<line x1="2400" y1="674.0" x2="2400" y2="683.5" stroke="#c8c8c8" stroke-width="1"/>
<text x="2400.5" y="707" font-size="18.4" text-anchor="middle" fill="#000" font-weight="normal" textLength="22.2" lengthAdjust="spacingAndGlyphs">0h</text>
<text x="0" y="0" font-size="23" text-anchor="middle" fill="#333" font-weight="normal" textLength="29.5" lengthAdjust="spacingAndGlyphs" transform="translate(86,370.2) rotate(-90)">kW</text>
<rect x="155.0" y="815.0" width="2261" height="505" fill="#efefef"/>
<rect x="478" y="1175.71" width="323" height="72.14" fill="#fff"/>
<rect x="1124" y="1175.71" width="323" height="72.14" fill="#fff"/>
<rect x="1770" y="1175.71" width="323" height="72.14" fill="#fff"/>
<line x1="478.5" y1="1175.71" x2="478.5" y2="1247.86" stroke="#d0d0d0" stroke-width="1"/>
<line x1="801.5" y1="1175.71" x2="801.5" y2="1247.86" stroke="#d0d0d0" stroke-width="1"/>
<line x1="1124.5" y1="1175.71" x2="1124.5" y2="1247.86" stroke="#d0d0d0" stroke-width="1"/>
<line x1="1447.5" y1="1175.71" x2="1447.5" y2="1247.86" stroke="#d0d0d0" stroke-width="1"/>
<line x1="1770.5" y1="1175.71" x2="1770.5" y2="1247.86" stroke="#d0d0d0" stroke-width="1"/>
<line x1="2093.5" y1="1175.71" x2="2093.5" y2="1247.86" stroke="#d0d0d0" stroke-width="1"/>
<rect x="478" y="1031.43" width="323" height="72.14" fill="#fff"/>
<rect x="1124" y="1031.43" width="323" height="72.14" fill="#fff"/>
<rect x="1770" y="1031.43" width="323" height="72.14" fill="#fff"/>
<line x1="478.5" y1="1031.43" x2="478.5" y2="1103.57" stroke="#d0d0d0" stroke-width="1"/>
<line x1="801.5" y1="1031.43" x2="801.5" y2="1103.57" stroke="#d0d0d0" stroke-width="1"/>
<line x1="1124.5" y1="1031.43" x2="1124.5" y2="1103.57" stroke="#d0d0d0" stroke-width="1"/>
<line x1="1447.5" y1="1031.43" x2="1447.5" y2="1103.57" stroke="#d0d0d0" stroke-width="1"/>
<line x1="1770.5" y1="1031.43" x2="1770.5" y2="1103.57" stroke="#d0d0d0" stroke-width="1"/>
<line x1="2093.5" y1="1031.43" x2="2093.5" y2="1103.57" stroke="#d0d0d0" stroke-width="1"/>
<rect x="478" y="887.14" width="323" height="72.14" fill="#fff"/>
<rect x="1124" y="887.14" width="323" height="72.14" fill="#fff"/>
<rect x="1770" y="887.14" width="323" height="72.14" fill="#fff"/>
<line x1="478.5" y1="887.14" x2="478.5" y2="959.29" stroke="#d0d0d0" stroke-width="1"/>
<line x1="801.5" y1="887.14" x2="801.5" y2="959.29" stroke="#d0d0d0" stroke-width="1"/>
<line x1="1124.5" y1="887.14" x2="1124.5" y2="959.29" stroke="#d0d0d0" stroke-width="1"/>
<line x1="1447.5" y1="887.14" x2="1447.5" y2="959.29" stroke="#d0d0d0" stroke-width="1"/>
<line x1="1770.5" y1="887.14" x2="1770.5" y2="959.29" stroke="#d0d0d0" stroke-width="1"/>
<line x1="2093.5" y1="887.14" x2="2093.5" y2="959.29" stroke="#d0d0d0" stroke-width="1"/>
<line x1="155.0" y1="1248.5" x2="2416.0" y2="1248.5" stroke="#c4c4c4" stroke-width="1"/>
<line x1="155.0" y1="1176.5" x2="2416.0" y2="1176.5" stroke="#c4c4c4" stroke-width="1"/>
<line x1="155.0" y1="1104.5" x2="2416.0" y2="1104.5" stroke="#c4c4c4" stroke-width="1"/>
<line x1="155.0" y1="1031.5" x2="2416.0" y2="1031.5" stroke="#c4c4c4" stroke-width="1"/>
<line x1="155.0" y1="959.5" x2="2416.0" y2="959.5" stroke="#c4c4c4" stroke-width="1"/>
<line x1="155.0" y1="887.5" x2="2416.0" y2="887.5" stroke="#c4c4c4" stroke-width="1"/>
<line x1="155.0" y1="815.5" x2="2416.0" y2="815.5" stroke="#c4c4c4" stroke-width="1"/>
<path d="M155 1320.0V1305.57H156.12V1312.79H157.24V1305.57H158.36V1312.79H159.49V1305.57H160.61V1305.57H161.73V1312.79H162.85V1305.57H163.97V1312.79H165.09V1305.57H166.22V1312.79H167.34V1312.79H168.46V1305.57H169.58V1305.57H170.7V1312.79H171.82V1312.79H172.94V1305.57H174.07V1305.57H175.19V1305.57H176.31V1305.57H177.43V1305.57H178.55V1312.79H179.67V1305.57H180.8V1312.79H181.92V1312.79H183.04V1312.79H184.16V1312.79H185.28V1305.57H186.4V1312.79H187.52V1305.57H188.65V1305.57H189.77V1305.57H190.89V1305.57H192.01V1312.79H193.13V1312.79H194.25V1312.79H195.38V1305.57H196.5V1305.57H197.62V1312.79H198.74V1305.57H199.86V1305.57H200.98V1312.79H202.1V1305.57H203.23V1305.57H204.35V1312.79H205.47V1305.57H206.59V1305.57H207.71V1305.57H208.83V1305.57H209.95V1312.79H211.08V1305.57H212.2V1312.79H213.32V1305.57H214.44V1305.57H215.56V1312.79H216.68V1305.57H217.81V1312.79H218.93V1305.57H220.05V1305.57H221.17V1305.57H222.29V1305.57H223.41V1312.79H224.53V1305.57H225.66V1305.57H226.78V1305.57H227.9V1305.57H229.02V1305.57H230.14V1305.57H231.26V1305.57H232.39V1305.57H233.51V1312.79H234.63V1305.57H235.75V1305.57H236.87V1320.0ZM383.79 1320.0V1305.57H384.91V1305.57H386.03V1305.57H387.16V1305.57H388.28V1305.57H389.4V1305.57H390.52V1305.57H391.64V1305.57H392.76V1305.57H393.89V1305.57H395.01V1305.57H396.13V1305.57H397.25V1312.79H398.37V1312.79H399.49V1305.57H400.61V1305.57H401.74V1312.79H402.86V1305.57H403.98V1305.57H405.1V1305.57H406.22V1305.57H407.34V1305.57H408.47V1312.79H409.59V1291.14H410.71V1305.57H411.83V1305.57H412.95V1305.57H414.07V1305.57H415.19V1305.57H416.32V1305.57H417.44V1305.57H418.56V1305.57H419.68V1305.57H420.8V1305.57H421.92V1305.57H423.05V1305.57H424.17V1305.57H425.29V1312.79H426.41V1305.57H427.53V1305.57H428.65V1305.57H429.77V1305.57H430.9V1305.57H432.02V1305.57H433.14V1305.57H434.26V1305.57H435.38V1305.57H436.5V1305.57H437.62V1298.36H438.75V1305.57H439.87V1298.36H440.99V1298.36H442.11V1305.57H443.23V1298.36H444.35V1298.36H445.48V1305.57H446.6V1298.36H447.72V1298.36H448.84V1305.57H449.96V1298.36H451.08V1305.57H452.2V1305.57H453.33V1298.36H454.45V1298.36H455.57V1305.57H456.69V1298.36H457.81V1291.14H458.93V1305.57H460.06V1305.57H461.18V1305.57H462.3V1298.36H463.42V1305.57H464.54V1305.57H465.66V1298.36H466.78V1298.36H467.91V1298.36H469.03V1305.57H470.15V1305.57H471.27V1305.57H472.39V1298.36H473.51V1305.57H474.64V1291.14H475.76V1305.57H476.88V1291.14H478V1298.36H479.12V1305.57H480.24V1305.57H481.36V1298.36H482.49V1298.36H483.61V1298.36H484.73V1305.57H485.85V1298.36H486.97V1298.36H488.09V1298.36H489.22V1298.36H490.34V1305.57H491.46V1305.57H492.58V1305.57H493.7V1298.36H494.82V1298.36H495.94V1298.36H497.07V1291.14H498.19V1305.57H499.31V1298.36H500.43V1305.57H501.55V1298.36H502.67V1298.36H503.8V1305.57H504.92V1298.36H506.04V1305.57H507.16V1305.57H508.28V1305.57H509.4V1291.14H510.52V1291.14H511.65V1298.36H512.77V1291.14H513.89V1298.36H515.01V1298.36H516.13V1298.36H517.25V1298.36H518.38V1298.36H519.5V1305.57H520.62V1298.36H521.74V1298.36H522.86V1298.36H523.98V1298.36H525.1V1298.36H526.23V1291.14H527.35V1298.36H528.47V1298.36H529.59V1305.57H530.71V1298.36H531.83V1305.57H532.95V1305.57H534.08V1298.36H535.2V1305.57H536.32V1305.57H537.44V1298.36H538.56V1298.36H539.68V1298.36H540.81V1298.36H541.93V1298.36H543.05V1305.57H544.17V1305.57H545.29V1298.36H546.41V1298.36H547.53V1298.36H548.66V1291.14H549.78V1305.57H550.9V1298.36H552.02V1305.57H553.14V1298.36H554.26V1298.36H555.39V1298.36H556.51V1298.36H557.63V1298.36H558.75V1298.36H559.87V1320.0ZM706.79 1320.0V1312.79H707.91V1312.79H709.03V1305.57H710.16V1312.79H711.28V1305.57H712.4V1312.79H713.52V1312.79H714.64V1305.57H715.76V1312.79H716.89V1305.57H718.01V1305.57H719.13V1305.57H720.25V1305.57H721.37V1305.57H722.49V1305.57H723.61V1305.57H724.74V1305.57H725.86V1305.57H726.98V1312.79H728.1V1305.57H729.22V1305.57H730.34V1305.57H731.47V1305.57H732.59V1312.79H733.71V1312.79H734.83V1305.57H735.95V1312.79H737.07V1305.57H738.19V1305.57H739.32V1312.79H740.44V1305.57H741.56V1305.57H742.68V1312.79H743.8V1305.57H744.92V1312.79H746.05V1305.57H747.17V1305.57H748.29V1312.79H749.41V1312.79H750.53V1312.79H751.65V1305.57H752.77V1305.57H753.9V1312.79H755.02V1305.57H756.14V1305.57H757.26V1305.57H758.38V1312.79H759.5V1312.79H760.62V1312.79H761.75V1298.36H762.87V1298.36H763.99V1305.57H765.11V1305.57H766.23V1305.57H767.35V1298.36H768.48V1298.36H769.6V1298.36H770.72V1291.14H771.84V1298.36H772.96V1305.57H774.08V1305.57H775.2V1298.36H776.33V1298.36H777.45V1291.14H778.57V1305.57H779.69V1305.57H780.81V1298.36H781.93V1305.57H783.06V1305.57H784.18V1298.36H785.3V1298.36H786.42V1305.57H787.54V1305.57H788.66V1305.57H789.78V1305.57H790.91V1298.36H792.03V1298.36H793.15V1305.57H794.27V1305.57H795.39V1305.57H796.51V1305.57H797.64V1305.57H798.76V1298.36H799.88V1298.36H801V1291.14H802.12V1305.57H803.24V1298.36H804.36V1298.36H805.49V1305.57H806.61V1298.36H807.73V1298.36H808.85V1298.36H809.97V1305.57H811.09V1298.36H812.22V1291.14H813.34V1305.57H814.46V1305.57H815.58V1298.36H816.7V1291.14H817.82V1305.57H818.94V1298.36H820.07V1298.36H821.19V1298.36H822.31V1305.57H823.43V1305.57H824.55V1298.36H825.67V1298.36H826.8V1305.57H827.92V1298.36H829.04V1305.57H830.16V1298.36H831.28V1305.57H832.4V1298.36H833.52V1298.36H834.65V1305.57H835.77V1291.14H836.89V1298.36H838.01V1298.36H839.13V1305.57H840.25V1305.57H841.37V1298.36H842.5V1291.14H843.62V1298.36H844.74V1298.36H845.86V1305.57H846.98V1305.57H848.1V1305.57H849.23V1305.57H850.35V1305.57H851.47V1298.36H852.59V1305.57H853.71V1305.57H854.83V1298.36H855.95V1298.36H857.08V1298.36H858.2V1298.36H859.32V1291.14H860.44V1291.14H861.56V1298.36H862.68V1305.57H863.81V1305.57H864.93V1298.36H866.05V1298.36H867.17V1305.57H868.29V1298.36H869.41V1305.57H870.53V1298.36H871.66V1305.57H872.78V1305.57H873.9V1298.36H875.02V1291.14H876.14V1298.36H877.26V1305.57H878.39V1298.36H879.51V1305.57H880.63V1305.57H881.75V1298.36H882.87V1320.0ZM1029.79 1320.0V1305.57H1030.91V1305.57H1032.03V1305.57H1033.16V1305.57H1034.28V1305.57H1035.4V1305.57H1036.52V1305.57H1037.64V1298.36H1038.76V1305.57H1039.89V1305.57H1041.01V1305.57H1042.13V1305.57H1043.25V1305.57H1044.37V1305.57H1045.49V1305.57H1046.61V1305.57H1047.74V1305.57H1048.86V1305.57H1049.98V1305.57H1051.1V1305.57H1052.22V1305.57H1053.34V1305.57H1054.47V1305.57H1055.59V1305.57H1056.71V1305.57H1057.83V1305.57H1058.95V1305.57H1060.07V1312.79H1061.19V1305.57H1062.32V1305.57H1063.44V1305.57H1064.56V1305.57H1065.68V1305.57H1066.8V1305.57H1067.92V1305.57H1069.05V1305.57H1070.17V1305.57H1071.29V1305.57H1072.41V1305.57H1073.53V1305.57H1074.65V1305.57H1075.77V1305.57H1076.9V1305.57H1078.02V1305.57H1079.14V1305.57H1080.26V1305.57H1081.38V1305.57H1082.5V1305.57H1083.62V1312.79H1084.75V1305.57H1085.87V1305.57H1086.99V1312.79H1088.11V1305.57H1089.23V1298.36H1090.35V1305.57H1091.48V1305.57H1092.6V1298.36H1093.72V1305.57H1094.84V1305.57H1095.96V1305.57H1097.08V1305.57H1098.2V1305.57H1099.33V1298.36H1100.45V1305.57H1101.57V1298.36H1102.69V1305.57H1103.81V1305.57H1104.93V1298.36H1106.06V1298.36H1107.18V1305.57H1108.3V1298.36H1109.42V1305.57H1110.54V1298.36H1111.66V1298.36H1112.78V1305.57H1113.91V1305.57H1115.03V1298.36H1116.15V1305.57H1117.27V1305.57H1118.39V1291.14H1119.51V1305.57H1120.64V1305.57H1121.76V1305.57H1122.88V1291.14H1124V1305.57H1125.12V1305.57H1126.24V1305.57H1127.36V1298.36H1128.49V1305.57H1129.61V1298.36H1130.73V1305.57H1131.85V1291.14H1132.97V1298.36H1134.09V1298.36H1135.22V1298.36H1136.34V1291.14H1137.46V1298.36H1138.58V1305.57H1139.7V1291.14H1140.82V1283.93H1141.94V1298.36H1143.07V1298.36H1144.19V1291.14H1145.31V1291.14H1146.43V1298.36H1147.55V1298.36H1148.67V1298.36H1149.8V1298.36H1150.92V1298.36H1152.04V1298.36H1153.16V1283.93H1154.28V1298.36H1155.4V1298.36H1156.52V1298.36H1157.65V1283.93H1158.77V1298.36H1159.89V1298.36H1161.01V1298.36H1162.13V1298.36H1163.25V1291.14H1164.38V1291.14H1165.5V1291.14H1166.62V1298.36H1167.74V1298.36H1168.86V1298.36H1169.98V1305.57H1171.1V1291.14H1172.23V1291.14H1173.35V1298.36H1174.47V1298.36H1175.59V1298.36H1176.71V1291.14H1177.83V1298.36H1178.95V1291.14H1180.08V1298.36H1181.2V1291.14H1182.32V1291.14H1183.44V1298.36H1184.56V1291.14H1185.68V1298.36H1186.81V1283.93H1187.93V1291.14H1189.05V1291.14H1190.17V1298.36H1191.29V1298.36H1192.41V1298.36H1193.53V1291.14H1194.66V1298.36H1195.78V1298.36H1196.9V1298.36H1198.02V1298.36H1199.14V1298.36H1200.26V1298.36H1201.39V1298.36H1202.51V1283.93H1203.63V1291.14H1204.75V1298.36H1205.87V1320.0ZM1352.79 1320.0V1291.14H1353.91V1298.36H1355.03V1298.36H1356.16V1291.14H1357.28V1298.36H1358.4V1298.36H1359.52V1305.57H1360.64V1298.36H1361.76V1298.36H1362.89V1298.36H1364.01V1305.57H1365.13V1298.36H1366.25V1305.57H1367.37V1305.57H1368.49V1298.36H1369.61V1298.36H1370.74V1305.57H1371.86V1298.36H1372.98V1305.57H1374.1V1298.36H1375.22V1298.36H1376.34V1298.36H1377.47V1298.36H1378.59V1298.36H1379.71V1298.36H1380.83V1298.36H1381.95V1298.36H1383.07V1305.57H1384.19V1298.36H1385.32V1291.14H1386.44V1305.57H1387.56V1298.36H1388.68V1298.36H1389.8V1298.36H1390.92V1298.36H1392.05V1305.57H1393.17V1298.36H1394.29V1298.36H1395.41V1298.36H1396.53V1298.36H1397.65V1298.36H1398.77V1298.36H1399.9V1298.36H1401.02V1305.57H1402.14V1298.36H1403.26V1298.36H1404.38V1298.36H1405.5V1305.57H1406.62V1298.36H1407.75V1298.36H1408.87V1298.36H1409.99V1305.57H1411.11V1298.36H1412.23V1298.36H1413.35V1305.57H1414.48V1305.57H1415.6V1298.36H1416.72V1298.36H1417.84V1298.36H1418.96V1305.57H1420.08V1312.79H1421.2V1312.79H1422.33V1312.79H1423.45V1312.79H1424.57V1312.79H1425.69V1312.79H1426.81V1312.79H1427.93V1305.57H1429.06V1305.57H1430.18V1312.79H1431.3V1305.57H1432.42V1312.79H1433.54V1312.79H1434.66V1305.57H1435.78V1305.57H1436.91V1305.57H1438.03V1312.79H1439.15V1312.79H1440.27V1305.57H1441.39V1312.79H1442.51V1312.79H1443.64V1312.79H1444.76V1298.36H1445.88V1305.57H1447V1305.57H1448.12V1312.79H1449.24V1305.57H1450.36V1312.79H1451.49V1312.79H1452.61V1305.57H1453.73V1312.79H1454.85V1305.57H1455.97V1305.57H1457.09V1312.79H1458.22V1305.57H1459.34V1305.57H1460.46V1312.79H1461.58V1312.79H1462.7V1305.57H1463.82V1305.57H1464.94V1305.57H1466.07V1305.57H1467.19V1305.57H1468.31V1305.57H1469.43V1305.57H1470.55V1312.79H1471.67V1312.79H1472.8V1305.57H1473.92V1298.36H1475.04V1305.57H1476.16V1305.57H1477.28V1305.57H1478.4V1312.79H1479.52V1312.79H1480.65V1312.79H1481.77V1305.57H1482.89V1312.79H1484.01V1305.57H1485.13V1305.57H1486.25V1312.79H1487.37V1305.57H1488.5V1305.57H1489.62V1312.79H1490.74V1312.79H1491.86V1305.57H1492.98V1298.36H1494.1V1312.79H1495.23V1305.57H1496.35V1305.57H1497.47V1312.79H1498.59V1312.79H1499.71V1305.57H1500.83V1305.57H1501.95V1305.57H1503.08V1305.57H1504.2V1305.57H1505.32V1305.57H1506.44V1305.57H1507.56V1305.57H1508.68V1305.57H1509.81V1298.36H1510.93V1305.57H1512.05V1305.57H1513.17V1291.14H1514.29V1305.57H1515.41V1298.36H1516.53V1305.57H1517.66V1298.36H1518.78V1305.57H1519.9V1305.57H1521.02V1305.57H1522.14V1298.36H1523.26V1305.57H1524.39V1305.57H1525.51V1305.57H1526.63V1298.36H1527.75V1305.57H1528.87V1298.36H1529.99V1305.57H1531.11V1305.57H1532.24V1305.57H1533.36V1305.57H1534.48V1305.57H1535.6V1291.14H1536.72V1305.57H1537.84V1305.57H1538.97V1305.57H1540.09V1305.57H1541.21V1305.57H1542.33V1298.36H1543.45V1298.36H1544.57V1305.57H1545.69V1305.57H1546.82V1298.36H1547.94V1298.36H1549.06V1298.36H1550.18V1305.57H1551.3V1298.36H1552.42V1298.36H1553.55V1305.57H1554.67V1305.57H1555.79V1305.57H1556.91V1305.57H1558.03V1305.57H1559.15V1305.57H1560.27V1298.36H1561.4V1305.57H1562.52V1305.57H1563.64V1298.36H1564.76V1305.57H1565.88V1298.36H1567V1305.57H1568.12V1305.57H1569.25V1298.36H1570.37V1298.36H1571.49V1305.57H1572.61V1298.36H1573.73V1305.57H1574.85V1305.57H1575.98V1291.14H1577.1V1305.57H1578.22V1305.57H1579.34V1305.57H1580.46V1305.57H1581.58V1305.57H1582.7V1305.57H1583.83V1298.36H1584.95V1305.57H1586.07V1305.57H1587.19V1305.57H1588.31V1305.57H1589.43V1305.57H1590.56V1298.36H1591.68V1298.36H1592.8V1298.36H1593.92V1298.36H1595.04V1305.57H1596.16V1305.57H1597.28V1305.57H1598.41V1298.36H1599.53V1305.57H1600.65V1305.57H1601.77V1305.57H1602.89V1305.57H1604.01V1305.57H1605.14V1305.57H1606.26V1305.57H1607.38V1298.36H1608.5V1305.57H1609.62V1298.36H1610.74V1305.57H1611.86V1305.57H1612.99V1291.14H1614.11V1305.57H1615.23V1305.57H1616.35V1305.57H1617.47V1298.36H1618.59V1305.57H1619.72V1291.14H1620.84V1305.57H1621.96V1305.57H1623.08V1305.57H1624.2V1305.57H1625.32V1298.36H1626.44V1305.57H1627.57V1305.57H1628.69V1305.57H1629.81V1298.36H1630.93V1305.57H1632.05V1305.57H1633.17V1298.36H1634.3V1305.57H1635.42V1305.57H1636.54V1305.57H1637.66V1298.36H1638.78V1298.36H1639.9V1305.57H1641.02V1305.57H1642.15V1298.36H1643.27V1305.57H1644.39V1305.57H1645.51V1298.36H1646.63V1298.36H1647.75V1305.57H1648.87V1305.57H1650V1305.57H1651.12V1305.57H1652.24V1305.57H1653.36V1305.57H1654.48V1305.57H1655.6V1305.57H1656.73V1305.57H1657.85V1305.57H1658.97V1305.57H1660.09V1298.36H1661.21V1305.57H1662.33V1305.57H1663.45V1298.36H1664.58V1298.36H1665.7V1305.57H1666.82V1305.57H1667.94V1305.57H1669.06V1305.57H1670.18V1305.57H1671.31V1305.57H1672.43V1298.36H1673.55V1305.57H1674.67V1298.36H1675.79V1305.57H1676.91V1305.57H1678.03V1298.36H1679.16V1298.36H1680.28V1305.57H1681.4V1305.57H1682.52V1305.57H1683.64V1305.57H1684.76V1298.36H1685.89V1305.57H1687.01V1305.57H1688.13V1305.57H1689.25V1305.57H1690.37V1305.57H1691.49V1298.36H1692.61V1298.36H1693.74V1298.36H1694.86V1305.57H1695.98V1291.14H1697.1V1291.14H1698.22V1298.36H1699.34V1305.57H1700.47V1298.36H1701.59V1298.36H1702.71V1305.57H1703.83V1305.57H1704.95V1305.57H1706.07V1305.57H1707.19V1298.36H1708.32V1305.57H1709.44V1305.57H1710.56V1305.57H1711.68V1291.14H1712.8V1298.36H1713.92V1291.14H1715.05V1298.36H1716.17V1298.36H1717.29V1291.14H1718.41V1298.36H1719.53V1283.93H1720.65V1298.36H1721.77V1291.14H1722.9V1298.36H1724.02V1298.36H1725.14V1298.36H1726.26V1291.14H1727.38V1305.57H1728.5V1298.36H1729.62V1298.36H1730.75V1298.36H1731.87V1305.57H1732.99V1298.36H1734.11V1298.36H1735.23V1298.36H1736.35V1298.36H1737.48V1291.14H1738.6V1298.36H1739.72V1298.36H1740.84V1298.36H1741.96V1291.14H1743.08V1298.36H1744.2V1298.36H1745.33V1298.36H1746.45V1291.14H1747.57V1298.36H1748.69V1305.57H1749.81V1298.36H1750.93V1298.36H1752.06V1298.36H1753.18V1298.36H1754.3V1291.14H1755.42V1291.14H1756.54V1298.36H1757.66V1298.36H1758.78V1298.36H1759.91V1291.14H1761.03V1298.36H1762.15V1298.36H1763.27V1298.36H1764.39V1283.93H1765.51V1298.36H1766.64V1298.36H1767.76V1298.36H1768.88V1291.14H1770V1298.36H1771.12V1298.36H1772.24V1291.14H1773.36V1298.36H1774.49V1291.14H1775.61V1298.36H1776.73V1298.36H1777.85V1291.14H1778.97V1298.36H1780.09V1298.36H1781.22V1298.36H1782.34V1291.14H1783.46V1298.36H1784.58V1291.14H1785.7V1298.36H1786.82V1298.36H1787.94V1298.36H1789.07V1298.36H1790.19V1298.36H1791.31V1291.14H1792.43V1291.14H1793.55V1305.57H1794.67V1298.36H1795.8V1298.36H1796.92V1298.36H1798.04V1291.14H1799.16V1298.36H1800.28V1305.57H1801.4V1291.14H1802.52V1298.36H1803.65V1291.14H1804.77V1291.14H1805.89V1291.14H1807.01V1298.36H1808.13V1298.36H1809.25V1298.36H1810.37V1298.36H1811.5V1291.14H1812.62V1298.36H1813.74V1298.36H1814.86V1298.36H1815.98V1298.36H1817.1V1298.36H1818.23V1291.14H1819.35V1291.14H1820.47V1291.14H1821.59V1298.36H1822.71V1298.36H1823.83V1298.36H1824.95V1298.36H1826.08V1298.36H1827.2V1291.14H1828.32V1305.57H1829.44V1283.93H1830.56V1291.14H1831.68V1298.36H1832.81V1298.36H1833.93V1298.36H1835.05V1305.57H1836.17V1298.36H1837.29V1283.93H1838.41V1298.36H1839.53V1291.14H1840.66V1291.14H1841.78V1298.36H1842.9V1298.36H1844.02V1298.36H1845.14V1291.14H1846.26V1298.36H1847.39V1298.36H1848.51V1298.36H1849.63V1291.14H1850.75V1298.36H1851.87V1298.36H1852.99V1298.36H1854.11V1291.14H1855.24V1298.36H1856.36V1291.14H1857.48V1291.14H1858.6V1298.36H1859.72V1291.14H1860.84V1291.14H1861.97V1291.14H1863.09V1291.14H1864.21V1298.36H1865.33V1283.93H1866.45V1298.36H1867.57V1298.36H1868.69V1291.14H1869.82V1283.93H1870.94V1298.36H1872.06V1298.36H1873.18V1298.36H1874.3V1291.14H1875.42V1298.36H1876.55V1298.36H1877.67V1291.14H1878.79V1291.14H1879.91V1298.36H1881.03V1283.93H1882.15V1291.14H1883.27V1291.14H1884.4V1298.36H1885.52V1291.14H1886.64V1298.36H1887.76V1291.14H1888.88V1291.14H1890V1291.14H1891.12V1305.57H1892.25V1298.36H1893.37V1298.36H1894.49V1298.36H1895.61V1305.57H1896.73V1305.57H1897.85V1305.57H1898.98V1298.36H1900.1V1305.57H1901.22V1298.36H1902.34V1291.14H1903.46V1298.36H1904.58V1298.36H1905.7V1298.36H1906.83V1305.57H1907.95V1298.36H1909.07V1305.57H1910.19V1298.36H1911.31V1298.36H1912.43V1305.57H1913.56V1305.57H1914.68V1298.36H1915.8V1298.36H1916.92V1305.57H1918.04V1298.36H1919.16V1305.57H1920.28V1305.57H1921.41V1305.57H1922.53V1305.57H1923.65V1298.36H1924.77V1305.57H1925.89V1312.79H1927.01V1305.57H1928.14V1298.36H1929.26V1298.36H1930.38V1305.57H1931.5V1305.57H1932.62V1291.14H1933.74V1305.57H1934.86V1305.57H1935.99V1298.36H1937.11V1305.57H1938.23V1305.57H1939.35V1305.57H1940.47V1305.57H1941.59V1312.79H1942.72V1312.79H1943.84V1305.57H1944.96V1312.79H1946.08V1312.79H1947.2V1305.57H1948.32V1305.57H1949.44V1298.36H1950.57V1312.79H1951.69V1312.79H1952.81V1312.79H1953.93V1312.79H1955.05V1312.79H1956.17V1298.36H1957.3V1305.57H1958.42V1305.57H1959.54V1312.79H1960.66V1305.57H1961.78V1312.79H1962.9V1305.57H1964.02V1312.79H1965.15V1312.79H1966.27V1312.79H1967.39V1312.79H1968.51V1298.36H1969.63V1312.79H1970.75V1305.57H1971.87V1312.79H1973V1312.79H1974.12V1305.57H1975.24V1312.79H1976.36V1305.57H1977.48V1312.79H1978.6V1305.57H1979.73V1312.79H1980.85V1305.57H1981.97V1312.79H1983.09V1305.57H1984.21V1312.79H1985.33V1312.79H1986.45V1298.36H1987.58V1312.79H1988.7V1305.57H1989.82V1305.57H1990.94V1312.79H1992.06V1312.79H1993.18V1312.79H1994.31V1312.79H1995.43V1312.79H1996.55V1305.57H1997.67V1312.79H1998.79V1312.79H1999.91V1305.57H2001.03V1312.79H2002.16V1305.57H2003.28V1305.57H2004.4V1312.79H2005.52V1305.57H2006.64V1312.79H2007.76V1312.79H2008.89V1312.79H2010.01V1312.79H2011.13V1312.79H2012.25V1312.79H2013.37V1312.79H2014.49V1305.57H2015.61V1305.57H2016.74V1305.57H2017.86V1312.79H2018.98V1312.79H2020.1V1305.57H2021.22V1312.79H2022.34V1312.79H2023.47V1305.57H2024.59V1312.79H2025.71V1305.57H2026.83V1312.79H2027.95V1312.79H2029.07V1305.57H2030.19V1312.79H2031.32V1305.57H2032.44V1305.57H2033.56V1312.79H2034.68V1305.57H2035.8V1305.57H2036.92V1312.79H2038.05V1312.79H2039.17V1312.79H2040.29V1312.79H2041.41V1305.57H2042.53V1312.79H2043.65V1312.79H2044.77V1312.79H2045.9V1312.79H2047.02V1305.57H2048.14V1305.57H2049.26V1305.57H2050.38V1298.36H2051.5V1305.57H2052.62V1298.36H2053.75V1298.36H2054.87V1305.57H2055.99V1298.36H2057.11V1298.36H2058.23V1305.57H2059.35V1298.36H2060.48V1298.36H2061.6V1305.57H2062.72V1298.36H2063.84V1305.57H2064.96V1305.57H2066.08V1298.36H2067.2V1298.36H2068.33V1305.57H2069.45V1305.57H2070.57V1305.57H2071.69V1298.36H2072.81V1305.57H2073.93V1305.57H2075.06V1298.36H2076.18V1305.57H2077.3V1305.57H2078.42V1291.14H2079.54V1298.36H2080.66V1305.57H2081.78V1291.14H2082.91V1305.57H2084.03V1298.36H2085.15V1305.57H2086.27V1305.57H2087.39V1298.36H2088.51V1298.36H2089.64V1298.36H2090.76V1305.57H2091.88V1298.36H2093V1305.57H2094.12V1305.57H2095.24V1298.36H2096.36V1298.36H2097.49V1298.36H2098.61V1305.57H2099.73V1291.14H2100.85V1298.36H2101.97V1305.57H2103.09V1305.57H2104.22V1298.36H2105.34V1305.57H2106.46V1298.36H2107.58V1305.57H2108.7V1291.14H2109.82V1305.57H2110.94V1291.14H2112.07V1298.36H2113.19V1305.57H2114.31V1298.36H2115.43V1305.57H2116.55V1291.14H2117.67V1305.57H2118.8V1298.36H2119.92V1298.36H2121.04V1305.57H2122.16V1305.57H2123.28V1305.57H2124.4V1305.57H2125.52V1298.36H2126.65V1305.57H2127.77V1305.57H2128.89V1298.36H2130.01V1305.57H2131.13V1298.36H2132.25V1305.57H2133.38V1305.57H2134.5V1298.36H2135.62V1305.57H2136.74V1305.57H2137.86V1305.57H2138.98V1305.57H2140.1V1305.57H2141.23V1298.36H2142.35V1298.36H2143.47V1298.36H2144.59V1298.36H2145.71V1305.57H2146.83V1291.14H2147.95V1305.57H2149.08V1298.36H2150.2V1305.57H2151.32V1298.36H2152.44V1298.36H2153.56V1305.57H2154.68V1305.57H2155.81V1305.57H2156.93V1298.36H2158.05V1305.57H2159.17V1298.36H2160.29V1291.14H2161.41V1305.57H2162.53V1298.36H2163.66V1298.36H2164.78V1298.36H2165.9V1298.36H2167.02V1305.57H2168.14V1305.57H2169.26V1305.57H2170.39V1298.36H2171.51V1305.57H2172.63V1298.36H2173.75V1320.0Z" fill="#9eecc2"/>
<path d="M236.87 1320.0V1305.57H237.99V1305.57H239.11V1305.57H240.24V1305.57H241.36V1305.57H242.48V1305.57H243.6V1305.57H244.72V1262.29H245.84V1291.14H246.97V1291.14H248.09V1291.14H249.21V1255.07H250.33V1219H251.45V1089.14H252.57V1089.14H253.69V1132.43H254.82V1132.43H255.94V1182.93H257.06V1182.93H258.18V1009.79H259.3V1002.57H260.42V1219H261.55V1219H262.67V1276.71H263.79V1118H264.91V836.64H266.03V937.64H267.15V1226.21H268.27V1240.64H269.4V1240.64H270.52V1269.5H271.64V1291.14H272.76V1291.14H273.88V1211.79H275V1211.79H276.12V1197.36H277.25V1276.71H278.37V1276.71H279.49V1190.14H280.61V1255.07H281.73V1190.14H282.85V1190.14H283.98V1190.14H285.1V1125.21H286.22V1125.21H287.34V1089.14H288.46V1255.07H289.58V1255.07H290.7V1262.29H291.83V1262.29H292.95V1240.64H294.07V1240.64H295.19V1226.21H296.31V1045.86H297.43V1031.43H298.56V1103.57H299.68V995.36H300.8V995.36H301.92V1067.5H303.04V1298.36H304.16V1298.36H305.28V1291.14H306.41V1291.14H307.53V1291.14H308.65V1283.93H309.77V1175.71H310.89V1175.71H312.01V1175.71H313.14V1298.36H314.26V1298.36H315.38V1298.36H316.5V1110.79H317.62V1038.64H318.74V1161.29H319.86V1190.14H320.99V1190.14H322.11V1240.64H323.23V1291.14H324.35V1291.14H325.47V1291.14H326.59V1298.36H327.72V1298.36H328.84V1298.36H329.96V1298.36H331.08V1269.5H332.2V1276.71H333.32V1276.71H334.44V1269.5H335.57V1283.93H336.69V1283.93H337.81V1283.93H338.93V1283.93H340.05V1298.36H341.17V1298.36H342.3V1255.07H343.42V1255.07H344.54V1255.07H345.66V1204.57H346.78V1269.5H347.9V1269.5H349.02V1298.36H350.15V1298.36H351.27V1298.36H352.39V1298.36H353.51V1298.36H354.63V1291.14H355.75V1291.14H356.88V1240.64H358V1240.64H359.12V1240.64H360.24V1247.86H361.36V1247.86H362.48V1247.86H363.6V1298.36H364.73V1291.14H365.85V1291.14H366.97V1291.14H368.09V1291.14H369.21V1298.36H370.33V1298.36H371.45V1298.36H372.58V1298.36H373.7V1298.36H374.82V1305.57H375.94V1305.57H377.06V1305.57H378.18V1305.57H379.31V1305.57H380.43V1305.57H381.55V1305.57H382.67V1305.57H383.79V1320.0ZM559.87 1320.0V1298.36H560.99V1298.36H562.11V1298.36H563.24V1298.36H564.36V1298.36H565.48V1298.36H566.6V1298.36H567.72V1298.36H568.84V1298.36H569.97V1298.36H571.09V1291.14H572.21V1291.14H573.33V1291.14H574.45V1255.07H575.57V1255.07H576.69V1024.21H577.82V1024.21H578.94V1067.5H580.06V1067.5H581.18V1154.07H582.3V1276.71H583.42V1276.71H584.55V1204.57H585.67V1074.71H586.79V1089.14H587.91V1089.14H589.03V1233.43H590.15V1233.43H591.27V1276.71H592.4V1276.71H593.52V1255.07H594.64V1255.07H595.76V1291.14H596.88V1291.14H598V1283.93H599.12V1283.93H600.25V1291.14H601.37V1291.14H602.49V1291.14H603.61V1276.71H604.73V1139.64H605.85V1139.64H606.98V1161.29H608.1V1255.07H609.22V1255.07H610.34V1283.93H611.46V1291.14H612.58V1291.14H613.7V1118H614.83V1118H615.95V1240.64H617.07V1240.64H618.19V1233.43H619.31V1233.43H620.43V1197.36H621.56V1262.29H622.68V1283.93H623.8V1283.93H624.92V1276.71H626.04V1276.71H627.16V1168.5H628.28V1168.5H629.41V1211.79H630.53V1211.79H631.65V1247.86H632.77V1262.29H633.89V1262.29H635.01V1291.14H636.14V1291.14H637.26V1283.93H638.38V1283.93H639.5V1298.36H640.62V1298.36H641.74V1283.93H642.86V1283.93H643.99V1298.36H645.11V1298.36H646.23V1291.14H647.35V1291.14H648.47V1298.36H649.59V1298.36H650.72V1283.93H651.84V1298.36H652.96V1298.36H654.08V1298.36H655.2V1298.36H656.32V1132.43H657.44V1110.79H658.57V1298.36H659.69V1298.36H660.81V1298.36H661.93V1291.14H663.05V1298.36H664.17V1298.36H665.3V1298.36H666.42V1298.36H667.54V1298.36H668.66V1298.36H669.78V1298.36H670.9V1298.36H672.02V1298.36H673.15V1298.36H674.27V1298.36H675.39V1219H676.51V1219H677.63V1269.5H678.75V1269.5H679.88V1190.14H681V1190.14H682.12V1269.5H683.24V1269.5H684.36V1219H685.48V1219H686.6V1226.21H687.73V1233.43H688.85V1233.43H689.97V1240.64H691.09V1283.93H692.21V1283.93H693.33V1283.93H694.45V1298.36H695.58V1298.36H696.7V1305.57H697.82V1305.57H698.94V1298.36H700.06V1305.57H701.18V1305.57H702.31V1305.57H703.43V1305.57H704.55V1305.57H705.67V1305.57H706.79V1320.0ZM882.87 1320.0V1298.36H883.99V1298.36H885.11V1291.14H886.24V1298.36H887.36V1298.36H888.48V1298.36H889.6V1298.36H890.72V1291.14H891.84V1298.36H892.97V1298.36H894.09V1291.14H895.21V1291.14H896.33V1291.14H897.45V1269.5H898.57V1262.29H899.69V995.36H900.82V995.36H901.94V1038.64H903.06V966.5H904.18V966.5H905.3V1038.64H906.42V1139.64H907.55V1139.64H908.67V1002.57H909.79V1017H910.91V1255.07H912.03V1255.07H913.15V1190.14H914.27V1190.14H915.4V1168.5H916.52V1168.5H917.64V1081.93H918.76V995.36H919.88V995.36H921V1197.36H922.12V1197.36H923.25V1154.07H924.37V1074.71H925.49V1074.71H926.61V1118H927.73V1118H928.85V1226.21H929.98V1226.21H931.1V1211.79H932.22V1211.79H933.34V1262.29H934.46V1291.14H935.58V1291.14H936.7V1276.71H937.83V1283.93H938.95V1283.93H940.07V1291.14H941.19V1291.14H942.31V1291.14H943.43V1283.93H944.56V1276.71H945.68V1276.71H946.8V1276.71H947.92V1276.71H949.04V1276.71H950.16V1276.71H951.28V1276.71H952.41V1291.14H953.53V1291.14H954.65V1291.14H955.77V1291.14H956.89V1291.14H958.01V1204.57H959.14V1204.57H960.26V1103.57H961.38V1226.21H962.5V1226.21H963.62V1283.93H964.74V1298.36H965.86V1298.36H966.99V1298.36H968.11V1298.36H969.23V1298.36H970.35V1298.36H971.47V1291.14H972.59V1291.14H973.72V1067.5H974.84V1197.36H975.96V1197.36H977.08V1283.93H978.2V1283.93H979.32V1298.36H980.44V1298.36H981.57V1291.14H982.69V1291.14H983.81V1298.36H984.93V1298.36H986.05V1298.36H987.17V1247.86H988.3V1283.93H989.42V1283.93H990.54V1190.14H991.66V1219H992.78V1182.93H993.9V1182.93H995.02V1125.21H996.15V1276.71H997.27V1276.71H998.39V1197.36H999.51V1204.57H1000.63V1204.57H1001.75V1226.21H1002.87V1247.86H1004V1247.86H1005.12V1247.86H1006.24V1291.14H1007.36V1291.14H1008.48V1291.14H1009.6V1291.14H1010.73V1298.36H1011.85V1298.36H1012.97V1298.36H1014.09V1298.36H1015.21V1298.36H1016.33V1283.93H1017.45V1283.93H1018.58V1283.93H1019.7V1305.57H1020.82V1305.57H1021.94V1305.57H1023.06V1305.57H1024.18V1305.57H1025.31V1305.57H1026.43V1305.57H1027.55V1305.57H1028.67V1305.57H1029.79V1320.0ZM1205.87 1320.0V1291.14H1206.99V1291.14H1208.11V1283.93H1209.24V1283.93H1210.36V1291.14H1211.48V1298.36H1212.6V1298.36H1213.72V1298.36H1214.84V1283.93H1215.97V1269.5H1217.09V1269.5H1218.21V1283.93H1219.33V1262.29H1220.45V1262.29H1221.57V1276.71H1222.69V1276.71H1223.82V1211.79H1224.94V1182.93H1226.06V1182.93H1227.18V1269.5H1228.3V1262.29H1229.42V1262.29H1230.55V1240.64H1231.67V1089.14H1232.79V1060.29H1233.91V1060.29H1235.03V1262.29H1236.15V1262.29H1237.27V1283.93H1238.4V1219H1239.52V1219H1240.64V1283.93H1241.76V1197.36H1242.88V1197.36H1244V1276.71H1245.12V1283.93H1246.25V1283.93H1247.37V1283.93H1248.49V1283.93H1249.61V1283.93H1250.73V1283.93H1251.85V1262.29H1252.98V1283.93H1254.1V1283.93H1255.22V1211.79H1256.34V1211.79H1257.46V1247.86H1258.58V1247.86H1259.7V1240.64H1260.83V1219H1261.95V1291.14H1263.07V1291.14H1264.19V1276.71H1265.31V1226.21H1266.43V1226.21H1267.56V1103.57H1268.68V1175.71H1269.8V1283.93H1270.92V1283.93H1272.04V1283.93H1273.16V1283.93H1274.28V1291.14H1275.41V1283.93H1276.53V1283.93H1277.65V1298.36H1278.77V1298.36H1279.89V1190.14H1281.01V1190.14H1282.14V1247.86H1283.26V1283.93H1284.38V1283.93H1285.5V1291.14H1286.62V1291.14H1287.74V1269.5H1288.86V1276.71H1289.99V1276.71H1291.11V1276.71H1292.23V1276.71H1293.35V1298.36H1294.47V1298.36H1295.59V1283.93H1296.72V1283.93H1297.84V1283.93H1298.96V1276.71H1300.08V1276.71H1301.2V1074.71H1302.32V1074.71H1303.44V1197.36H1304.57V1197.36H1305.69V1197.36H1306.81V1204.57H1307.93V1204.57H1309.05V1269.5H1310.17V1255.07H1311.3V1255.07H1312.42V1074.71H1313.54V1190.14H1314.66V1219H1315.78V1219H1316.9V1255.07H1318.02V1255.07H1319.15V1298.36H1320.27V1298.36H1321.39V1283.93H1322.51V1283.93H1323.63V1233.43H1324.75V1240.64H1325.88V1240.64H1327V1262.29H1328.12V1276.71H1329.24V1276.71H1330.36V1276.71H1331.48V1291.14H1332.6V1291.14H1333.73V1298.36H1334.85V1298.36H1335.97V1291.14H1337.09V1291.14H1338.21V1291.14H1339.33V1283.93H1340.45V1283.93H1341.58V1283.93H1342.7V1305.57H1343.82V1305.57H1344.94V1305.57H1346.06V1305.57H1347.18V1305.57H1348.31V1305.57H1349.43V1298.36H1350.55V1298.36H1351.67V1305.57H1352.79V1320.0ZM2173.75 1320.0V1283.93H2174.87V1283.93H2175.99V1298.36H2177.11V1298.36H2178.24V1298.36H2179.36V1298.36H2180.48V1298.36H2181.6V1298.36H2182.72V1298.36H2183.84V1298.36H2184.97V1298.36H2186.09V1298.36H2187.21V1298.36H2188.33V1298.36H2189.45V1255.07H2190.57V1276.71H2191.69V1276.71H2192.82V1204.57H2193.94V1031.43H2195.06V1031.43H2196.18V1125.21H2197.3V1146.86H2198.42V1197.36H2199.55V1255.07H2200.67V1255.07H2201.79V1255.07H2202.91V1255.07H2204.03V1262.29H2205.15V1262.29H2206.27V1262.29H2207.4V1262.29H2208.52V1255.07H2209.64V1255.07H2210.76V1262.29H2211.88V1262.29H2213V1276.71H2214.12V1276.71H2215.25V1276.71H2216.37V1262.29H2217.49V1262.29H2218.61V1240.64H2219.73V1240.64H2220.85V1233.43H2221.98V1233.43H2223.1V1240.64H2224.22V1240.64H2225.34V1240.64H2226.46V1240.64H2227.58V1262.29H2228.7V1132.43H2229.83V1168.5H2230.95V1168.5H2232.07V1262.29H2233.19V1262.29H2234.31V1276.71H2235.43V1276.71H2236.56V1262.29H2237.68V1262.29H2238.8V1154.07H2239.92V1154.07H2241.04V1233.43H2242.16V1233.43H2243.28V1255.07H2244.41V1269.5H2245.53V1269.5H2246.65V1269.5H2247.77V1269.5H2248.89V1190.14H2250.01V1190.14H2251.14V1175.71H2252.26V1233.43H2253.38V1262.29H2254.5V1283.93H2255.62V1283.93H2256.74V1262.29H2257.86V1262.29H2258.99V1276.71H2260.11V1276.71H2261.23V1168.5H2262.35V1038.64H2263.47V1081.93H2264.59V1081.93H2265.72V1269.5H2266.84V1269.5H2267.96V1276.71H2269.08V1291.14H2270.2V1291.14H2271.32V1283.93H2272.44V1283.93H2273.57V1283.93H2274.69V1283.93H2275.81V1283.93H2276.93V1283.93H2278.05V1283.93H2279.17V1283.93H2280.3V1283.93H2281.42V1283.93H2282.54V1283.93H2283.66V1283.93H2284.78V1283.93H2285.9V1283.93H2287.02V1197.36H2288.15V1197.36H2289.27V1175.71H2290.39V1175.71H2291.51V1154.07H2292.63V1154.07H2293.75V1204.57H2294.88V1204.57H2296V1283.93H2297.12V1240.64H2298.24V1255.07H2299.36V1255.07H2300.48V1233.43H2301.6V1233.43H2302.73V1269.5H2303.85V1269.5H2304.97V1269.5H2306.09V1291.14H2307.21V1291.14H2308.33V1291.14H2309.45V1283.93H2310.58V1283.93H2311.7V1291.14H2312.82V1320.0Z" fill="#239170"/>
<line x1="154.0" y1="815.0" x2="154.0" y2="1321.0" stroke="#707070" stroke-width="2.2"/>
<line x1="155.0" y1="1320.5" x2="2416.0" y2="1320.5" stroke="#707070" stroke-width="1.2"/>
<line x1="142" y1="1320.5" x2="153.0" y2="1320.5" stroke="#999" stroke-width="1"/>
<text x="132.8" y="1326.8" font-size="19.8" text-anchor="end" fill="#333" font-weight="normal" textLength="12.35" lengthAdjust="spacingAndGlyphs">0</text>
<line x1="142" y1="1248.5" x2="153.0" y2="1248.5" stroke="#999" stroke-width="1"/>
<text x="132.8" y="1254.66" font-size="19.8" text-anchor="end" fill="#333" font-weight="normal" textLength="24.69" lengthAdjust="spacingAndGlyphs">10</text>
<line x1="142" y1="1176.5" x2="153.0" y2="1176.5" stroke="#999" stroke-width="1"/>
<text x="132.8" y="1182.51" font-size="19.8" text-anchor="end" fill="#333" font-weight="normal" textLength="24.69" lengthAdjust="spacingAndGlyphs">20</text>
<line x1="142" y1="1104.5" x2="153.0" y2="1104.5" stroke="#999" stroke-width="1"/>
<text x="132.8" y="1110.37" font-size="19.8" text-anchor="end" fill="#333" font-weight="normal" textLength="24.69" lengthAdjust="spacingAndGlyphs">30</text>
<line x1="142" y1="1031.5" x2="153.0" y2="1031.5" stroke="#999" stroke-width="1"/>
<text x="132.8" y="1038.23" font-size="19.8" text-anchor="end" fill="#333" font-weight="normal" textLength="24.69" lengthAdjust="spacingAndGlyphs">40</text>
<line x1="142" y1="959.5" x2="153.0" y2="959.5" stroke="#999" stroke-width="1"/>
<text x="132.8" y="966.09" font-size="19.8" text-anchor="end" fill="#333" font-weight="normal" textLength="24.69" lengthAdjust="spacingAndGlyphs">50</text>
<line x1="142" y1="887.5" x2="153.0" y2="887.5" stroke="#999" stroke-width="1"/>
<text x="132.8" y="893.94" font-size="19.8" text-anchor="end" fill="#333" font-weight="normal" textLength="24.69" lengthAdjust="spacingAndGlyphs">60</text>
<line x1="142" y1="815.5" x2="153.0" y2="815.5" stroke="#999" stroke-width="1"/>
<text x="132.8" y="821.8" font-size="19.8" text-anchor="end" fill="#333" font-weight="normal" textLength="24.69" lengthAdjust="spacingAndGlyphs">70</text>
<line x1="155.5" y1="1321.5" x2="155.5" y2="1332.0" stroke="#c8c8c8" stroke-width="1"/>
<line x1="478.5" y1="1321.5" x2="478.5" y2="1332.0" stroke="#c8c8c8" stroke-width="1"/>
<line x1="801.5" y1="1321.5" x2="801.5" y2="1332.0" stroke="#c8c8c8" stroke-width="1"/>
<line x1="1124.5" y1="1321.5" x2="1124.5" y2="1332.0" stroke="#c8c8c8" stroke-width="1"/>
<line x1="1447.5" y1="1321.5" x2="1447.5" y2="1332.0" stroke="#c8c8c8" stroke-width="1"/>
<line x1="1770.5" y1="1321.5" x2="1770.5" y2="1332.0" stroke="#c8c8c8" stroke-width="1"/>
<line x1="2093.5" y1="1321.5" x2="2093.5" y2="1332.0" stroke="#c8c8c8" stroke-width="1"/>
<line x1="2416.5" y1="1321.5" x2="2416.5" y2="1332.0" stroke="#c8c8c8" stroke-width="1"/>
<text x="156" y="1356.7" font-size="20" text-anchor="middle" fill="#000" font-weight="normal" textLength="74.77" lengthAdjust="spacingAndGlyphs">mar. 07</text>
<text x="479" y="1356.7" font-size="20" text-anchor="middle" fill="#000" font-weight="normal" textLength="74.81" lengthAdjust="spacingAndGlyphs">mer. 08</text>
<text x="802" y="1356.7" font-size="20" text-anchor="middle" fill="#000" font-weight="normal" textLength="67.33" lengthAdjust="spacingAndGlyphs">jeu. 09</text>
<text x="1125" y="1356.7" font-size="20" text-anchor="middle" fill="#000" font-weight="normal" textLength="73.48" lengthAdjust="spacingAndGlyphs">ven. 10</text>
<text x="1448" y="1356.7" font-size="20" text-anchor="middle" fill="#000" font-weight="normal" textLength="78.72" lengthAdjust="spacingAndGlyphs">sam. 11</text>
<text x="1771" y="1356.7" font-size="20" text-anchor="middle" fill="#000" font-weight="normal" textLength="74.38" lengthAdjust="spacingAndGlyphs">dim. 12</text>
<text x="2094" y="1356.7" font-size="20" text-anchor="middle" fill="#000" font-weight="normal" textLength="67.69" lengthAdjust="spacingAndGlyphs">lun. 13</text>
<text x="0" y="0" font-size="23" text-anchor="middle" fill="#333" font-weight="normal" textLength="29.5" lengthAdjust="spacingAndGlyphs" transform="translate(86,1067.2) rotate(-90)">kW</text>
<path d="M1990 66.5H2406V90A8 8 0 0 1 2398 98H1998A8 8 0 0 1 1990 90Z" fill="#fff"/>
<text x="2110.2" y="89.6" font-size="25" text-anchor="start" fill="#000" font-weight="bold" style="font-family:'Liberation Sans',sans-serif;white-space:pre" textLength="175.5" lengthAdjust="spacingAndGlyphs">LHB-site-L580</text>
<rect x="1991.5" y="108.1" width="412" height="57.9" rx="10" ry="10" fill="#fff" stroke="#777" stroke-width="3"/>
<rect x="1991.5" y="177.5" width="412" height="57.8" rx="10" ry="10" fill="#fff" stroke="#777" stroke-width="3"/>
<rect x="1991.5" y="248" width="412" height="57.9" rx="10" ry="10" fill="#fff" stroke="#777" stroke-width="3"/>
<text x="2050.3" y="148" font-size="27.5" text-anchor="start" fill="#000" font-weight="normal" style="font-family:'Liberation Sans',sans-serif;white-space:pre" textLength="315" lengthAdjust="spacingAndGlyphs">Consommation: 158 kWh</text>
<text x="2111.6" y="218.6" font-size="27.5" text-anchor="start" fill="#000" font-weight="normal" style="font-family:'Liberation Sans',sans-serif;white-space:pre" textLength="192" lengthAdjust="spacingAndGlyphs">P Max :  40 kW</text>
<text x="2126.7" y="287.9" font-size="27.5" text-anchor="start" fill="#000" font-weight="normal" style="font-family:'Liberation Sans',sans-serif;white-space:pre" textLength="162" lengthAdjust="spacingAndGlyphs">P min : 1 kW</text>
<rect x="561.8" y="806" width="412.6" height="58.1" rx="10" ry="10" fill="#fff" stroke="#777" stroke-width="3"/>
<rect x="1099.7" y="806" width="412.6" height="58.1" rx="10" ry="10" fill="#fff" stroke="#777" stroke-width="3"/>
<rect x="1609.7" y="806" width="412.6" height="58.1" rx="10" ry="10" fill="#fff" stroke="#777" stroke-width="3"/>
<text x="620.7" y="845.9" font-size="27.5" text-anchor="start" fill="#000" font-weight="normal" style="font-family:'Liberation Sans',sans-serif;white-space:pre" textLength="315" lengthAdjust="spacingAndGlyphs">Consommation: 738 kWh</text>
<text x="1219.9" y="845.9" font-size="27.5" text-anchor="start" fill="#000" font-weight="normal" style="font-family:'Liberation Sans',sans-serif;white-space:pre" textLength="192" lengthAdjust="spacingAndGlyphs">P Max :  67 kW</text>
<text x="1744.3" y="845.9" font-size="27.5" text-anchor="start" fill="#000" font-weight="normal" style="font-family:'Liberation Sans',sans-serif;white-space:pre" textLength="163" lengthAdjust="spacingAndGlyphs">P min : 0 kW</text>
<rect x="1047.4" y="541.9" width="522.3" height="70" rx="10" ry="10" fill="rgba(255,255,255,0.9)"/>
<text x="1171.8" y="589.1" font-size="30.5" text-anchor="start" fill="#000" font-weight="bold" style="font-family:'Liberation Sans',sans-serif;white-space:pre" textLength="285" lengthAdjust="spacingAndGlyphs">lundi 13 avril 2026</text>
<rect x="176.2" y="49.1" width="481.9" height="77.8" fill="#0a0a1a"/>
<defs><linearGradient id="eco" x1="0" y1="0" x2="0" y2="1"><stop offset="0" stop-color="#00f0c0"/><stop offset="0.55" stop-color="#00e3b6"/><stop offset="1" stop-color="#00a888"/></linearGradient><linearGradient id="wv" x1="0" y1="0" x2="0" y2="1"><stop offset="0" stop-color="#00d2b2"/><stop offset="1" stop-color="#00b89a"/></linearGradient></defs>
<defs><linearGradient id="ecoG" gradientUnits="userSpaceOnUse" x1="0" y1="79" x2="0" y2="111"><stop offset="0" stop-color="#00f0c8"/><stop offset="0.52" stop-color="#00f0c8"/><stop offset="0.56" stop-color="#00c5a2"/><stop offset="1" stop-color="#00c09c"/></linearGradient></defs>
<g fill="none" stroke="url(#ecoG)" stroke-width="7.2" stroke-linecap="round" stroke-linejoin="round"><path d="M192.4 94.9H210.4A9 12 0 1 0 207.2 104.1"/><path d="M237.2 88.1A9 12 0 1 0 237.2 101.5"/><ellipse cx="257.1" cy="94.8" rx="9.5" ry="12"/></g>
<path d="M198.6 74.8L204.6 71.6" stroke="#00f0c8" stroke-width="5" stroke-linecap="round"/>
<g fill="none" stroke="#fff" stroke-width="7.2" stroke-linecap="round" stroke-linejoin="round"><path d="M276.4 85.4L283.8 106.4L291.2 83L299 106.4L313.8 66.6"/><path d="M316 86.2Q323 80.5 330 82.2Q335 83.8 335 92V106.4"/><ellipse cx="324.6" cy="100.6" rx="9.6" ry="6.6" stroke-width="6"/><path d="M346.2 74.4V100Q346.2 106.4 352.5 106.4"/><path d="M362.2 74.4V100Q362.2 106.4 368.5 106.4"/><path d="M341 81.8H372.6"/></g>
<ellipse cx="433.5" cy="88.7" rx="25.4" ry="27.8" fill="#00b0e0"/>
<text x="433.5" y="96" font-size="21" text-anchor="middle" fill="#fff" font-weight="normal" style="font-family:'Liberation Sans',sans-serif;white-space:pre" textLength="33" lengthAdjust="spacingAndGlyphs">Rte</text>
<line x1="419" y1="89.5" x2="448" y2="89.5" stroke="#fff" stroke-width="1.2"/>
<text x="467.6" y="79" font-size="12.5" text-anchor="start" fill="#17a3d8" font-weight="normal" style="font-family:'Liberation Sans',sans-serif;white-space:pre" textLength="47" lengthAdjust="spacingAndGlyphs">Le réseau</text>
<text x="467.6" y="92.2" font-size="12.5" text-anchor="start" fill="#17a3d8" font-weight="normal" style="font-family:'Liberation Sans',sans-serif;white-space:pre" textLength="62" lengthAdjust="spacingAndGlyphs">de transport</text>
<text x="467.6" y="105.4" font-size="12.5" text-anchor="start" fill="#17a3d8" font-weight="normal" style="font-family:'Liberation Sans',sans-serif;white-space:pre" textLength="57" lengthAdjust="spacingAndGlyphs">d'électricité</text>
<rect x="546.4" y="61.3" width="100.3" height="55.9" fill="#fff"/>
<rect x="553" y="68.4" width="6" height="7" fill="#2a3b8f"/><rect x="559" y="68.4" width="6" height="7" fill="#fff"/><rect x="565" y="68.4" width="6" height="7" fill="#e1000f"/>
<text x="553" y="85.2" font-size="8.6" text-anchor="start" fill="#222" font-weight="bold" style="font-family:'Liberation Sans',sans-serif;white-space:pre" textLength="43.5" lengthAdjust="spacingAndGlyphs">RÉPUBLIQUE</text>
<text x="553" y="93" font-size="8.6" text-anchor="start" fill="#222" font-weight="bold" style="font-family:'Liberation Sans',sans-serif;white-space:pre" textLength="37.5" lengthAdjust="spacingAndGlyphs">FRANÇAISE</text>
<line x1="553" y1="99" x2="566" y2="99" stroke="#888" stroke-width="1"/>
<line x1="553" y1="103.5" x2="564" y2="103.5" stroke="#888" stroke-width="1"/>
<line x1="553" y1="108" x2="562" y2="108" stroke="#888" stroke-width="1"/>
<rect x="607.2" y="66.5" width="34.5" height="45" fill="#fff" stroke="#3d72c4" stroke-width="1"/>
<text x="624.4" y="74.7" font-size="6.5" text-anchor="middle" fill="#e53030" font-weight="bold" style="font-family:'Liberation Sans',sans-serif;white-space:pre" textLength="24" lengthAdjust="spacingAndGlyphs">ADEME</text>
<circle cx="624.4" cy="86.7" r="8.3" fill="#2d6fc4"/>
<path d="M619 82 q4 -2 7 1 q-2 4 -5 3 z M624 88 q4 0 5 4 q-3 2 -6 0 z" fill="#9cc3ee"/>
<line x1="613" y1="100" x2="636" y2="100" stroke="#e86a6a" stroke-width="1.1"/>
<line x1="613" y1="103.6" x2="636" y2="103.6" stroke="#e86a6a" stroke-width="1.1"/>
<line x1="613" y1="107.2" x2="636" y2="107.2" stroke="#e86a6a" stroke-width="1.1"/>
<path d="M169.1 135.2H660.6V259H169.1ZM172.6 138.8H289V189H172.6ZM172.6 194H289V253H172.6ZM294.4 138.8H411.4V189H294.4ZM294.4 194H411.4V253H294.4ZM416.3 138.8H533.3V189H416.3ZM416.3 194H533.3V253H416.3ZM538.1 138.8H655.5V189H538.1ZM538.1 194H655.5V253H538.1Z" fill="#dcdcdc" fill-rule="evenodd"/>
<text x="222" y="174.8" font-size="32" text-anchor="start" fill="#000" font-weight="normal" style="font-family:'Liberation Sans',sans-serif;white-space:pre" textLength="19.5" lengthAdjust="spacingAndGlyphs">J</text>
<text x="311.3" y="174.8" font-size="32" text-anchor="start" fill="#000" font-weight="normal" style="font-family:'Liberation Sans',sans-serif;white-space:pre" textLength="19.5" lengthAdjust="spacingAndGlyphs">J</text>
<path d="M346.6 164.2H361.2M353.9 156.6V171.8" stroke="#111" stroke-width="2.3" fill="none"/>
<text x="433.2" y="174.8" font-size="32" text-anchor="start" fill="#000" font-weight="normal" style="font-family:'Liberation Sans',sans-serif;white-space:pre" textLength="19.5" lengthAdjust="spacingAndGlyphs">J</text>
<path d="M468.5 164.2H483.1M475.8 156.6V171.8" stroke="#111" stroke-width="2.3" fill="none"/>
<text x="555" y="174.8" font-size="32" text-anchor="start" fill="#000" font-weight="normal" style="font-family:'Liberation Sans',sans-serif;white-space:pre" textLength="19.5" lengthAdjust="spacingAndGlyphs">J</text>
<path d="M590.8 164.2H605.4M598.1 156.6V171.8" stroke="#111" stroke-width="2.3" fill="none"/>
<path d="M383.8 157.6L389.2 153.2V174.8" stroke="#111" stroke-width="2.3" fill="none"/>
<text x="500.2" y="174.8" font-size="31.5" text-anchor="start" fill="#000" font-weight="bold" style="font-family:'Liberation Sans',sans-serif;white-space:pre" textLength="18.5" lengthAdjust="spacingAndGlyphs">2</text>
<text x="621" y="174.8" font-size="31.5" text-anchor="start" fill="#000" font-weight="normal" style="font-family:'Liberation Sans',sans-serif;white-space:pre" textLength="19" lengthAdjust="spacingAndGlyphs">3</text>
<g transform="translate(180,195) scale(1,1)">
<rect x="0" y="0" width="106" height="55" fill="url(#wv)"/>
<path d="M13 0 C35 12 55 24 72 23 C88 22 98 18 106 15 V0 Z" fill="#00f0c8"/>
<path d="M29 0 C45 7 58 11 72 10 C88 9 98 5 106 3 V0 Z" fill="#00a08a"/>
</g>
<g transform="translate(302.2,196) scale(1,1.02)">
<rect x="0" y="0" width="106" height="55" fill="url(#wv)"/>
<path d="M13 0 C35 12 55 24 72 23 C88 22 98 18 106 15 V0 Z" fill="#00f0c8"/>
<path d="M29 0 C45 7 58 11 72 10 C88 9 98 5 106 3 V0 Z" fill="#00a08a"/>
</g>
<g transform="translate(424,196) scale(1,1.02)">
<rect x="0" y="0" width="106" height="55" fill="url(#wv)"/>
<path d="M13 0 C35 12 55 24 72 23 C88 22 98 18 106 15 V0 Z" fill="#00f0c8"/>
<path d="M29 0 C45 7 58 11 72 10 C88 9 98 5 106 3 V0 Z" fill="#00a08a"/>
</g>
<g transform="translate(543.8,196) scale(1,1.02)">
<rect x="0" y="0" width="106" height="55" fill="url(#wv)"/>
<path d="M13 0 C35 12 55 24 72 23 C88 22 98 18 106 15 V0 Z" fill="#00f0c8"/>
<path d="M29 0 C45 7 58 11 72 10 C88 9 98 5 106 3 V0 Z" fill="#00a08a"/>
</g>
<path d="M2322 1322.5H2437.5V1378A3.5 3.5 0 0 1 2434 1381.5H2322Z" fill="#fff"/>
<path d="M2359.3 1340.6 A12.3 12.3 0 1 0 2361.8 1350.8" fill="none" stroke="#1a72b8" stroke-width="5.2" stroke-linecap="round"/>
<path d="M2348.5 1350.9 H2361.5" fill="none" stroke="#1a72b8" stroke-width="5.2" stroke-linecap="round"/>
<text x="2366" y="1363.5" font-size="35" text-anchor="start" fill="#1a72b8" font-weight="bold" style="font-family:'Liberation Sans',sans-serif;white-space:pre" textLength="21" lengthAdjust="spacingAndGlyphs">2</text>
<path d="M2391.8 1324.6 L2383.6 1337.8 L2392.8 1339.2 L2388.8 1362.8 L2400 1338.4 L2391.2 1337.2 Z" fill="#e85d2a"/>
<path d="M2403.3 1338.6H2424.4L2418.5 1345H2398.9Z M2397.7 1347.8H2418.5L2412.7 1354.3H2393.6Z M2393 1357H2416.7L2410.6 1363.5H2388.6Z" fill="#f39325"/>
<text x="2393" y="1335.3" font-size="8" text-anchor="start" fill="#e8602c" font-weight="bold" style="font-family:'Liberation Sans',sans-serif;white-space:pre" textLength="31" lengthAdjust="spacingAndGlyphs">FRANCE</text>
<line x1="2340" y1="1366.8" x2="2414" y2="1366.8" stroke="#7fb0dd" stroke-width="1.6" stroke-dasharray="2.5 0.8"/>
</svg>
</body></html>
